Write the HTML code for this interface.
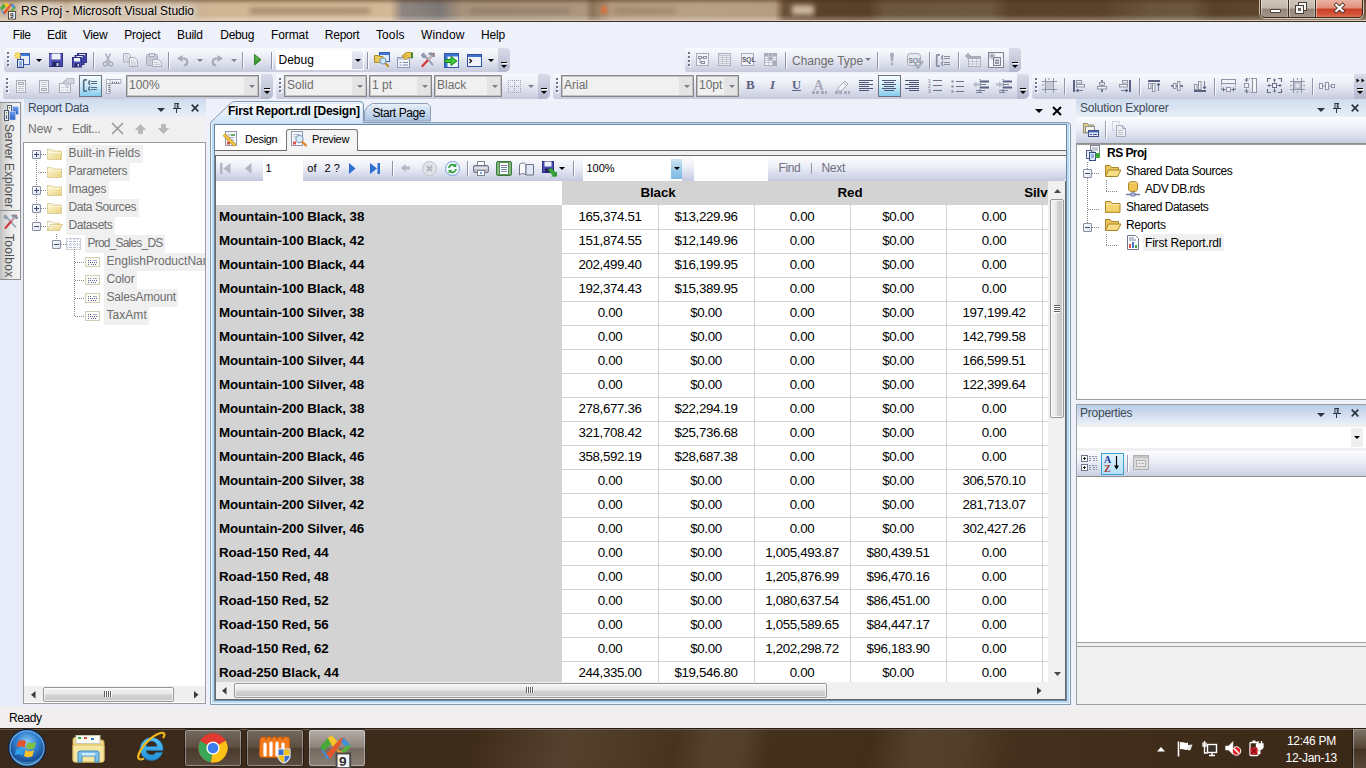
<!DOCTYPE html>
<html>
<head>
<meta charset="utf-8">
<title>RS Proj - Microsoft Visual Studio</title>
<style>
*{box-sizing:border-box;margin:0;padding:0}
html,body{width:1366px;height:768px;overflow:hidden;background:#eef1fa;font-family:"Liberation Sans",sans-serif;font-size:12px;color:#000}
.a{position:absolute}
svg{position:absolute;overflow:visible}
#root{position:relative;width:1366px;height:768px;overflow:hidden}
.t{position:absolute;white-space:nowrap;line-height:14px}
/* title bar */
#title{left:0;top:0;width:1366px;height:22px;background:linear-gradient(90deg,#cdb89e 0px,#c9b296 195px,#d2b694 215px,#d4b896 390px,#8f857f 402px,#7d7876 440px,#a8927b 462px,#ad967d 585px,#8c745a 592px,#b39a7e 612px,#b8a083 700px,#b59c7f 775px,#6a5138 784px,#5a4129 822px,#594028 868px,#6c563d 885px,#6e583f 990px,#5a4129 1010px,#5b422a 1100px,#6a543b 1150px,#6c563d 1190px,#58402a 1215px,#5d452d 1250px,#6f5943 1366px)}
#title .shade{left:0;top:0;width:1366px;height:20px;background:linear-gradient(180deg,rgba(70,45,20,.45) 0,rgba(70,45,20,.12) 3px,rgba(255,255,255,0) 5px,rgba(255,255,255,0) 15px,rgba(255,255,255,.18) 18px,rgba(255,255,255,.25) 20px)}
#title .bl{left:0;top:20px;width:1366px;height:2px;background:linear-gradient(180deg,#d9ccba 0,#d9ccba 50%,#382d24 50%,#382d24 100%)}
#title .txt{left:21px;top:4px;font-size:12px;color:#000;text-shadow:0 0 6px #fff,0 0 8px #fff,0 0 10px rgba(255,255,255,.9)}
/* menu */
#menubar{left:0;top:22px;width:1366px;height:26px;background:#eef1fa}
#menubar span{position:absolute;top:6px;font-size:12px;white-space:nowrap;line-height:14px}
/* toolbars */
.tb{position:absolute;height:24.500px;border-radius:3px 5px 6px 3px;background:linear-gradient(180deg,#f9fafd 0%,#eff1f8 30%,#d9dcea 70%,#c6cadc 100%)}
.ovf{position:absolute;right:0;top:0;width:12px;height:100%;border-radius:0 4px 5px 0;background:linear-gradient(180deg,#d8dbe8,#b4b8cd)}
.grip{position:absolute;left:3px;top:4px;width:3px;height:16px}
.grip i{position:absolute;left:0;width:2px;height:2px;background:#6f738a;box-shadow:1px 1px 0 #fff}
.sep{position:absolute;top:4px;width:1px;height:17px;background:#9094aa;box-shadow:1px 0 0 #fbfbfd}
.dd{position:absolute;width:0;height:0;border-left:3px solid transparent;border-right:3px solid transparent;border-top:3px solid #000}
.dd.g{border-top-color:#7b7f8c}
.cb{position:absolute;top:2px;height:21px;border:1px solid #868686;background:#f0f0f0;box-shadow:inset 0 0 0 1px #c4c4c4;font-size:12px;color:#6d6d6d}
.cb .btn{position:absolute;right:1px;top:1px;bottom:1px;width:13px;background:#e4e4e4}
.cb .t{left:2px;top:1.500px;line-height:15px}
.sel{position:absolute;border:1px solid #6e7380;background:linear-gradient(180deg,#f4fbff 0,#d3eefa 45%,#84cbeb 100%)}
/* panels */
.phead{position:absolute;height:18px;background:linear-gradient(180deg,#cfdcee 0%,#dbe5f3 50%,#e9eff8 100%);font-size:12px;color:#404a58;white-space:nowrap}
.phead .t{left:4px;top:1px}
#status{left:0;top:706px;width:1366px;height:22px;background:#f0eeee;font-size:12px}
#taskbar{left:0;top:728px;width:1366px;height:40px;background:linear-gradient(100deg,#3b2a1b 0,#3d2b1b 440px,#3f2c1b 470px,#54412e 560px,#4d3a27 620px,#47331f 668px,#54412e 700px,#523f2c 735px,#43301d 760px,#412e1b 860px,#54412e 905px,#513e2b 950px,#43301d 1000px,#3f2c1a 1150px,#3a2817 1366px)}
#rpt .t{line-height:23px;height:24px}
#rpt .hd{font-weight:bold;text-align:center;letter-spacing:-.1px}
#rpt .rn{font-weight:bold;letter-spacing:-.1px}
#rpt .nv{width:96px;text-align:center;letter-spacing:-.37px}

</style>
</head>
<body>
<div id="root">

<!-- p_title -->
<div id="title" class="a"><div class="a shade"></div><div class="a" style="left:250px;top:8px;width:120px;height:6px;background:rgba(110,85,60,.45);filter:blur(2.500px)"></div><div class="a" style="left:470px;top:8px;width:100px;height:6px;background:rgba(110,95,80,.35);filter:blur(2.500px)"></div><div class="a" style="left:601px;top:6px;width:6px;height:8px;background:rgba(225,110,50,.8);filter:blur(1.500px)"></div><div class="a" style="left:615px;top:8px;width:60px;height:6px;background:rgba(125,100,80,.35);filter:blur(2.500px)"></div><div class="a" style="left:792px;top:5px;width:22px;height:10px;background:rgba(215,195,170,.9);filter:blur(2.500px)"></div><div class="a bl"></div><svg style="left:0px;top:1px" width="17" height="19" viewBox="0 0 17 19"><path d="M0 7L4 2.500 6.200 5 2 9.200z" fill="#4aa83a"/><path d="M4 2.500L6 1.200 9 4.500 6.500 7z" fill="#f4c62a"/><path d="M10.500 2.800L13 2.300 5.200 13.200 3 11.200z" fill="#e4572a"/><path d="M0 7.300L2 9.200 5.200 13.200 3.300 13.200z" fill="#3f8fd8"/><path d="M12 2.300L16 6.500 14.300 8.200 10.800 4.600z" fill="#3f8fd8"/><path d="M16 6.500L13 10.200 10.500 9.200 14.300 6z" fill="#5aae3e"/><path d="M8.500 8L10.500 9.200 13 10.200 9.500 11.500z" fill="#f0a02a"/><rect x="8.500" y="10.500" width="7" height="7.500" fill="#f6f6f6" stroke="#4a4a4a"/><text x="9.800" y="17" font-family="Liberation Sans" font-size="7" font-weight="bold" fill="#333">9</text></svg><div class="t txt" style="letter-spacing:-0.026px">RS Proj - Microsoft Visual Studio</div><div class="a" style="left:1259px;top:-2px;width:105px;height:21px;border:1px solid rgba(235,220,200,.8);border-radius:0 0 6px 6px"></div><div class="a" style="left:1260px;top:-1px;width:103px;height:19px;border:1px solid #3c2c20;border-radius:0 0 5px 5px;overflow:hidden;background:#3c2c20"><div class="a" style="left:0;top:0;width:27px;height:18px;background:linear-gradient(180deg,#cfc6bb 0,#c2b7aa 45%,#94877a 50%,#a3978a 100%);box-shadow:inset 1px 0 0 rgba(255,255,255,.45),inset -1px 0 0 rgba(255,255,255,.3)"></div><div class="a" style="left:28px;top:0;width:26px;height:18px;background:linear-gradient(180deg,#cfc6bb 0,#c2b7aa 45%,#94877a 50%,#a3978a 100%);box-shadow:inset 1px 0 0 rgba(255,255,255,.45),inset -1px 0 0 rgba(255,255,255,.3)"></div><div class="a" style="left:55px;top:0;width:47px;height:18px;background:linear-gradient(180deg,#eab3a3 0,#e08e78 45%,#c83f27 50%,#d4563a 80%,#e08060 100%);box-shadow:inset 1px 0 0 rgba(255,255,255,.45),inset -1px 0 0 rgba(255,255,255,.3)"></div></div><div class="a" style="left:1269.500px;top:8.500px;width:11px;height:4px;background:#fff;border:1px solid #4a4038;border-radius:1px"></div><svg style="left:1295px;top:1.5px" width="12" height="12" viewBox="0 0 12 12"><rect x="3.500" y="0.500" width="8" height="8" fill="#f4f4f4" stroke="#4a4038"/><rect x="0.500" y="3.500" width="8" height="8" fill="#f4f4f4" stroke="#4a4038"/><rect x="3" y="6" width="3" height="3" fill="#6a6058"/></svg><svg style="left:1334px;top:3px" width="11" height="10" viewBox="0 0 11 10"><path d="M2.300 2l6.400 6M8.700 2l-6.400 6" stroke="#4a3028" stroke-width="3.800" stroke-linecap="square"/><path d="M2.300 2l6.400 6M8.700 2l-6.400 6" stroke="#fff" stroke-width="2.200" stroke-linecap="square"/></svg></div>
<div id="menubar" class="a"><span style="left:12.8px;letter-spacing:-0.409px">File</span><span style="left:47.1px;letter-spacing:-0.319px">Edit</span><span style="left:82.7px;letter-spacing:-0.273px">View</span><span style="left:124.2px;letter-spacing:-0.178px">Project</span><span style="left:177.1px;letter-spacing:-0.197px">Build</span><span style="left:220.3px;letter-spacing:-0.332px">Debug</span><span style="left:270.9px;letter-spacing:-0.084px">Format</span><span style="left:324.8px;letter-spacing:-0.236px">Report</span><span style="left:376px;letter-spacing:0.097px">Tools</span><span style="left:420.9px;letter-spacing:0.187px">Window</span><span style="left:480.9px;letter-spacing:-0.145px">Help</span></div>

<!-- p_toolbars -->
<div class="tb" style="left:4px;top:48px;width:506px;height:24px"><div class="grip"><i style="top:0"></i><i style="top:4px"></i><i style="top:8px"></i><i style="top:12px"></i></div><svg style="left:10px;top:4px" width="16" height="16" viewBox="0 0 16 16"><rect x="6.5" y="1.5" width="9" height="11" fill="#e6ecf8" stroke="#3b62b5"/><rect x="7" y="2" width="8" height="2" fill="#3f78d8"/>
<path d="M3.5 0v7M0 3.5h7M1 1l5 5M6 1l-5 5" stroke="#f2c832" stroke-width="1.2"/><circle cx="3.5" cy="3.5" r="1.6" fill="#ffe979"/>
<rect x="3.5" y="7.5" width="6" height="8" fill="#dfe8f8" stroke="#2f4b86"/><path d="M5 10h3M5 12h3M5 14h3" stroke="#4a74c9"/></svg><div class="dd" style="left:32px;top:11px"></div><svg style="left:45px;top:5px" width="14" height="14" viewBox="0 0 14 14"><rect x="0.5" y="0.5" width="13" height="13" fill="#4a4db0" stroke="#2c2f82"/><rect x="2.5" y="0.5" width="9" height="6" fill="#eef0fa"/><rect x="3.5" y="9" width="7" height="4.5" fill="#23265e"/><rect x="7.5" y="10" width="2" height="3" fill="#cfd2ea"/><path d="M1 1v12" stroke="#8a8de0"/></svg><svg style="left:68px;top:4.5px" width="15" height="15" viewBox="0 0 15 15"><rect x="5.5" y="0.5" width="9" height="9" fill="#4a4db0" stroke="#2c2f82"/><rect x="7" y="1" width="6" height="2" fill="#e6e8f6"/>
<rect x="3" y="2.5" width="9" height="9" fill="#4a4db0" stroke="#2c2f82"/><rect x="4.5" y="3" width="6" height="2" fill="#e6e8f6"/>
<rect x="0.5" y="4.5" width="9" height="9.5" fill="#4a4db0" stroke="#2c2f82"/><rect x="2" y="5" width="6" height="3.5" fill="#eef0fa"/><rect x="3" y="10.5" width="4.5" height="3.5" fill="#23265e"/><rect x="5.5" y="11" width="1.5" height="2.5" fill="#cfd2ea"/></svg><div class="sep" style="left:89px;top:4px"></div><svg style="left:99px;top:5px" width="10" height="14" viewBox="0 0 10 14"><path d="M2.5 0.5L6.5 9M7.5 0.5L3.5 9" stroke="#a9adba" stroke-width="1.6" fill="none"/><circle cx="2.3" cy="11" r="2" fill="none" stroke="#a9adba" stroke-width="1.4"/><circle cx="7.7" cy="11" r="2" fill="none" stroke="#a9adba" stroke-width="1.4"/></svg><svg style="left:119px;top:5px" width="15" height="14" viewBox="0 0 15 14"><path d="M0.5 0.5h5l2 2v6.5h-7z" fill="#e9ebf2" stroke="#a9adba"/><path d="M2 3h3M2 5h4M2 7h4" stroke="#c4c7d2"/>
<path d="M6.5 4.5h5l3 3v6h-8z" fill="#eceef4" stroke="#a9adba"/><path d="M8 8h3M8 10h5M8 12h5" stroke="#c4c7d2"/></svg><svg style="left:142px;top:5px" width="16" height="14" viewBox="0 0 16 14"><rect x="0.5" y="1.5" width="11" height="11" rx="1" fill="#c9ccd8" stroke="#a9adba"/><rect x="3.5" y="0.5" width="5" height="3" fill="#e4e6ee" stroke="#a9adba"/>
<path d="M6.5 6.5h6l3 3v4h-9z" fill="#eceef4" stroke="#a9adba"/><path d="M8 9.5h4M8 11.5h6" stroke="#c4c7d2"/></svg><div class="sep" style="left:164px;top:4px"></div><svg style="left:173px;top:6.5px" width="13" height="12" viewBox="0 0 13 12"><path d="M0 3.5L5.5 0v2.5h1.5a4.5 4.5 0 0 1 1.2 8.8l-1.5 0.4v-2l0.7-0.3a2.6 2.6 0 0 0 -0.8-5h-1.1v2.6z" fill="#a9adba"/></svg><div class="dd g" style="left:193px;top:11px"></div><svg style="left:206px;top:6.5px" width="13" height="12" viewBox="0 0 13 12"><path d="M13 3.5L7.500 0v2.5h-1.500a4.5 4.5 0 0 0 -1.200 8.800l1.500 0.400v-2l-0.700-0.300a2.600 2.600 0 0 1 0.800-5h1.100v2.600z" fill="#a9adba"/></svg><div class="dd g" style="left:227px;top:11px"></div><div class="sep" style="left:238px;top:4px"></div><svg style="left:249.5px;top:6px" width="8" height="12" viewBox="0 0 8 12"><path d="M0.5 0.500v10.500L7 5.750z" fill="#3f9b2f" stroke="#1f6e1a" stroke-width="0.8"/><path d="M1.500 2v4l3-1.200z" fill="#6fc45a" opacity=".7"/></svg><div class="sep" style="left:267px;top:4px"></div><div class="a" style="left:272px;top:2px;width:88px;height:20px;background:#fff"><div class="a" style="right:1px;top:1px;width:11px;height:18px;background:linear-gradient(180deg,#eaedf6,#c9cde0)"></div><div class="t" style="left:2.500px;top:2.500px;font-size:12px">Debug</div><div class="dd" style="left:79px;top:9px"></div></div><div class="sep" style="left:363px;top:4px"></div><svg style="left:370px;top:4px" width="16" height="16" viewBox="0 0 16 16"><rect x="5.500" y="0.500" width="10" height="9" fill="#e3eaf8" stroke="#3b62b5"/><rect x="6" y="1" width="9" height="2" fill="#3f78d8"/>
<path d="M0.500 3.500h4l1 1h3.500v6h-8.500z" fill="#e8c75a" stroke="#b08a22"/>
<circle cx="9" cy="9" r="3" fill="#cfe6f7" stroke="#7f9fc5" stroke-width="1.200"/><path d="M11.300 11.300l3.500 3.500" stroke="#b98924" stroke-width="2"/></svg><svg style="left:393px;top:4px" width="16" height="16" viewBox="0 0 16 16"><rect x="0.500" y="5.500" width="12" height="10" fill="#f3f5fb" stroke="#8d97b5"/><rect x="1" y="6" width="11" height="2" fill="#c9d3ea"/><path d="M2.500 10.500h2M6 10.500h5M2.500 13h2M6 13h5" stroke="#7a88b0"/>
<path d="M5 4l4-3.500h6v5h-4l-2.500 2.500z" fill="#efc94e" stroke="#a98622" stroke-width=".8"/><rect x="14" y="0.500" width="2" height="6" fill="#3f8a3a"/><path d="M6 5l3-3M7.500 6l3-3" stroke="#a98622" stroke-width=".7"/></svg><svg style="left:416px;top:4px" width="16" height="16" viewBox="0 0 16 16"><path d="M3 2l10 11" stroke="#9aa3b5" stroke-width="2"/><path d="M1 3.500a3 3 0 0 1 4-2.500l-1.500 2 1 1 2-1.500a3 3 0 0 1 -3.500 3.500z" fill="#8e99b0"/>
<path d="M13.500 2L2.500 14" stroke="#d23a3a" stroke-width="2.400" stroke-linecap="round"/><path d="M8 8l5-5.500" stroke="#b9bfcc" stroke-width="2"/>
<path d="M8.500 1.500c2-1.500 5-0.500 6.500 2.500l-1.500 1c-1-2-2.500-2.500-4-2z" fill="#8f98ab" stroke="#6e788f" stroke-width=".6"/></svg><svg style="left:440px;top:4.5px" width="15" height="15" viewBox="0 0 15 15"><rect x="0.500" y="0.500" width="14" height="14" fill="#f1f4fb" stroke="#2f59a8"/><rect x="1" y="1" width="13" height="2.500" fill="#3b73d3"/><rect x="1" y="3" width="2.500" height="11" fill="#3b73d3"/>
<path d="M1 6.500h6v-3l6 4.500-6 4.500v-3h-6z" fill="#3fc83a" stroke="#15851a"/></svg><svg style="left:463px;top:5.5px" width="15" height="13" viewBox="0 0 15 13"><rect x="0.500" y="0.500" width="14" height="12" fill="#f0f3fb" stroke="#2f4f9a"/><rect x="1" y="1" width="13" height="2" fill="#3d6fcc"/><path d="M2.500 5l2 2-2 2" stroke="#111" stroke-width="1.300" fill="none"/></svg><div class="dd" style="left:484px;top:11px"></div><div class="ovf"><div class="a" style="left:3px;top:14px;width:6px;height:1px;background:#000;box-shadow:1px 1px 0 #fff"></div><div class="dd" style="left:3px;top:17px"></div></div></div><div class="tb" style="left:685px;top:48px;width:336px;height:24px"><div class="grip"><i style="top:0"></i><i style="top:4px"></i><i style="top:8px"></i><i style="top:12px"></i></div><svg style="left:10.5px;top:5px" width="13" height="13" viewBox="0 0 13 13"><rect x="0.500" y="0.500" width="12" height="12" fill="#f1f2f7" stroke="#a9adba"/><rect x="2.500" y="3.500" width="3" height="2" fill="none" stroke="#8d91a0"/><rect x="7.500" y="3.500" width="3" height="2" fill="none" stroke="#8d91a0"/><rect x="5.500" y="8.500" width="3" height="2" fill="none" stroke="#8d91a0"/><path d="M4 5.500v4h1.500M5.500 4.500h2" stroke="#8d91a0" fill="none"/></svg><svg style="left:33px;top:5px" width="13" height="13" viewBox="0 0 13 13"><rect x="0.500" y="0.500" width="12" height="12" fill="#f1f2f7" stroke="#a9adba"/><path d="M0.500 2.500h12M0.500 4.500h12M0.500 6.500h12M0.500 8.500h12M0.500 10.500h12M4.500 0.500v12M8.500 0.500v12" stroke="#c4c7d2"/></svg><svg style="left:56px;top:5px" width="13" height="13" viewBox="0 0 13 13"><rect x="0.500" y="0.500" width="12" height="12" fill="#f1f2f7" stroke="#a9adba"/><text x="1" y="9" font-family="Liberation Sans" font-size="6.500" font-weight="bold" fill="#555a6a">SQL</text></svg><svg style="left:79px;top:5px" width="13" height="13" viewBox="0 0 13 13"><rect x="0.500" y="0.500" width="12" height="12" fill="#f1f2f7" stroke="#a9adba"/><rect x="1" y="1" width="11" height="2" fill="#a9adba"/><path d="M0.500 3.500h12M0.500 5.500h12M0.500 7.500h12M0.500 9.500h12M4.500 0.500v12M8.500 0.500v12" stroke="#c4c7d2"/><rect x="5" y="4" width="3" height="3" fill="#a9adba"/><rect x="9" y="8" width="3" height="4" fill="#a9adba"/></svg><div class="sep" style="left:100px;top:4px"></div><div class="t" style="left:107px;top:5.500px;color:#6d6d6d;font-size:12px">Change Type</div><div class="dd g" style="left:180px;top:10px"></div><div class="sep" style="left:192px;top:4px"></div><svg style="left:203.5px;top:5px" width="6" height="13" viewBox="0 0 6 13"><path d="M1 1.500a1.500 1.500 0 0 1 4 0l-1 7h-2z" fill="#a9adba"/><circle cx="3" cy="11" r="1.400" fill="#a9adba"/></svg><svg style="left:222px;top:4.5px" width="16" height="16" viewBox="0 0 16 16"><rect x="0.500" y="0.500" width="13" height="12" rx="3" fill="#e6e8ef" stroke="#a9adba"/><text x="1.500" y="9.500" font-family="Liberation Sans" font-size="6.500" font-weight="bold" fill="#7a7f90">SQL</text><path d="M8 11l3 4 5-7" stroke="#a9adba" stroke-width="2" fill="none"/></svg><div class="sep" style="left:244px;top:4px"></div><svg style="left:251px;top:5.5px" width="15" height="13" viewBox="0 0 15 13"><path d="M4 0.800h-2.300q-1 0-1 1v9.400q0 1 1 1h2.300" fill="none" stroke="#8a8fa0" stroke-width="1.700"/><path d="M7.200 1.300q-3 2.200 0 4.400M7.200 7.300q-3 2.200 0 4.400" fill="none" stroke="#8a8fa0" stroke-width="1.600"/><path d="M8 2.500h6M8 4.500h6M8 8.500h6M8 10.500h6" stroke="#8a8fa0" stroke-width="1.100"/></svg><div class="sep" style="left:273px;top:4px"></div><svg style="left:280px;top:5px" width="16" height="14" viewBox="0 0 16 14"><rect x="3.500" y="3.500" width="12" height="10" fill="#eef0f5" stroke="#a9adba"/><rect x="4" y="4" width="11" height="2" fill="#a9adba"/><path d="M3.500 8.500h12M3.500 11h12M7.500 6v7.500M11.500 6v7.500" stroke="#c4c7d2"/><path d="M3 0v6M0 3h6" stroke="#a9adba" stroke-width="2"/></svg><svg style="left:303px;top:4px" width="16" height="16" viewBox="0 0 16 16"><rect x="0.500" y="0.500" width="15" height="15" fill="#f4f5f9" stroke="#7f8494"/><rect x="5.500" y="5.500" width="7" height="8" fill="#e4e6ee" stroke="#7f8494"/><path d="M7 8.500h4M7 11h4" stroke="#7f8494" stroke-width="1.500"/><path d="M4 0.500v7M0.500 4h7M1.500 1.500l5 5M6.500 1.500l-5 5" stroke="#8d91a0" stroke-width=".9"/></svg><div class="ovf"><div class="a" style="left:3px;top:14px;width:6px;height:1px;background:#000;box-shadow:1px 1px 0 #fff"></div><div class="dd" style="left:3px;top:17px"></div></div></div><div class="tb" style="left:3px;top:74px;width:270px"><div class="grip"><i style="top:0"></i><i style="top:4px"></i><i style="top:8px"></i><i style="top:12px"></i></div><svg style="left:13px;top:5.5px" width="10" height="13" viewBox="0 0 10 13"><rect x="0.500" y="0.500" width="9" height="12" fill="#f2f3f7" stroke="#a9adba"/><rect x="2.500" y="2.500" width="5" height="2" fill="#e4e6ee" stroke="#a9adba"/><path d="M2 6.500h6M2 8.500h6M2 10.500h6" stroke="#c4c7d2"/></svg><svg style="left:36px;top:5.5px" width="10" height="13" viewBox="0 0 10 13"><rect x="0.500" y="0.500" width="9" height="12" fill="#f2f3f7" stroke="#a9adba"/><rect x="2.500" y="8.500" width="5" height="2" fill="#e4e6ee" stroke="#a9adba"/><path d="M2 2.500h6M2 4.500h6M2 6.500h6" stroke="#c4c7d2"/></svg><svg style="left:56px;top:4px" width="16" height="16" viewBox="0 0 16 16"><rect x="0.500" y="5.500" width="11" height="9" fill="#f1f2f7" stroke="#a9adba"/><path d="M2.500 9.500h2M6 9.500h4M2.500 12h2M6 12h4" stroke="#c4c7d2"/><path d="M4 4l4-3.500h7v5h-4l-3 3z" fill="#d5d8e2" stroke="#a9adba" stroke-width=".8"/><path d="M5 5l3-3M6.500 6.500l3-3M8 6.500l2-2" stroke="#a9adba" stroke-width=".7"/></svg><div class="sel" style="left:76px;top:1px;width:23px;height:22px"></div><svg style="left:80px;top:5px" width="15" height="13" viewBox="0 0 15 13"><path d="M4 0.800h-2.300q-1 0-1 1v9.400q0 1 1 1h2.300" fill="none" stroke="#567086" stroke-width="1.700"/><path d="M7.200 1.300q-3 2.200 0 4.400M7.200 7.300q-3 2.200 0 4.400" fill="none" stroke="#567086" stroke-width="1.600"/><path d="M8 2.500h6M8 4.500h6M8 8.500h6M8 10.500h6" stroke="#567086" stroke-width="1.100"/></svg><svg style="left:103px;top:4.5px" width="16" height="15" viewBox="0 0 16 15"><path d="M0.500 0.500h14.500v4h-11v10h-3.500z" fill="#f3f4f8" stroke="#a9adba"/><path d="M6.500 2.500v2M8.500 3v1.500M10.500 2.500v2M12.500 3v1.500M2 6.500h2M2.500 8.500h1.500M2 10.500h2M2.500 12.500h1.500" stroke="#6f7487"/><rect x="0.500" y="0.500" width="3.500" height="4" fill="#fff" stroke="#a9adba"/></svg><div class="cb" style="left:123px;width:133px;top:1px;height:22px"><div class="btn"></div><div class="t">100%</div><div class="dd g" style="right:3px;top:8.5px;border-left-width:3px;border-right-width:3px"></div></div><div class="ovf"><div class="a" style="left:3px;top:14px;width:6px;height:1px;background:#000;box-shadow:1px 1px 0 #fff"></div><div class="dd" style="left:3px;top:17px"></div></div></div><div class="tb" style="left:276px;top:74px;width:274px"><div class="grip"><i style="top:0"></i><i style="top:4px"></i><i style="top:8px"></i><i style="top:12px"></i></div><div class="cb" style="left:8px;width:83px;top:1px;height:22px"><div class="btn"></div><div class="t">Solid</div><div class="dd g" style="right:3px;top:8.5px;border-left-width:3px;border-right-width:3px"></div></div><div class="cb" style="left:93px;width:63px;top:1px;height:22px"><div class="btn"></div><div class="t">1 pt</div><div class="dd g" style="right:3px;top:8.5px;border-left-width:3px;border-right-width:3px"></div></div><div class="cb" style="left:158px;width:68px;top:1px;height:22px"><div class="btn"></div><div class="t">Black</div><div class="dd g" style="right:3px;top:8.5px;border-left-width:3px;border-right-width:3px"></div></div><svg style="left:232px;top:6px" width="14" height="14" viewBox="0 0 14 14"><path d="M0 0.500h14M0 6.500h14M0 12.500h14M0.500 0v13M6.500 0v13M12.500 0v13" fill="none" stroke="#9da1b0" stroke-dasharray="1 1"/></svg><div class="dd g" style="left:252px;top:11px"></div><div class="ovf"><div class="a" style="left:3px;top:14px;width:6px;height:1px;background:#000;box-shadow:1px 1px 0 #fff"></div><div class="dd" style="left:3px;top:17px"></div></div></div><div class="tb" style="left:553px;top:74px;width:476px"><div class="grip"><i style="top:0"></i><i style="top:4px"></i><i style="top:8px"></i><i style="top:12px"></i></div><div class="cb" style="left:8px;width:133px;top:1px;height:22px"><div class="btn"></div><div class="t">Arial</div><div class="dd g" style="right:3px;top:8.5px;border-left-width:3px;border-right-width:3px"></div></div><div class="cb" style="left:143px;width:43px;top:1px;height:22px"><div class="btn"></div><div class="t">10pt</div><div class="dd g" style="right:3px;top:8.5px;border-left-width:3px;border-right-width:3px"></div></div><div class="t" style="left:193px;top:3.200px;font-family:'Liberation Serif',serif;font-weight:bold;font-size:13px;line-height:16px;color:#5c6486">B</div><div class="t" style="left:217px;top:3.200px;font-style:italic;font-family:'Liberation Serif',serif;font-weight:bold;font-size:13px;line-height:16px;color:#5c6486">I</div><div class="t" style="left:239px;top:3.200px;font-family:'Liberation Serif',serif;font-weight:bold;font-size:13px;line-height:16px;color:#5c6486;font-size:12.500px;border-bottom:1px solid #5c6486;height:13.800px">U</div><svg style="left:259px;top:6px" width="15" height="14" viewBox="0 0 15 14"><text x="1.500" y="10" font-family="Liberation Serif" font-size="14" font-weight="bold" fill="#a5a9b8">A</text><path d="M0 12.500h3M4 12.500h3M9 12.500h3M13 12.500h2" stroke="#a5a9b8" stroke-width="3"/></svg><svg style="left:282px;top:6px" width="15" height="14" viewBox="0 0 15 14"><path d="M3 8l7-7 3 3-7 7h-3z" fill="#f1f2f6" stroke="#a5a9b8"/><path d="M8.500 2.500l3 3" stroke="#a5a9b8"/><path d="M0 12.500h3M4 12.500h3M9 12.500h3M13 12.500h2" stroke="#a5a9b8" stroke-width="3"/></svg><svg style="left:306px;top:6px" width="14" height="11" viewBox="0 0 14 11"><path d="M0 0.500h14M0 2.500h10M0 4.500h14M0 6.500h10M0 8.500h14M0 10.500h10" stroke="#4d5373"/></svg><div class="sel" style="left:325px;top:1px;width:23px;height:22px"></div><svg style="left:329px;top:6px" width="14" height="11" viewBox="0 0 14 11"><path d="M0 0.500h14M2 2.500h10M0 4.500h14M2 6.500h10M0 8.500h14M2 10.500h10" stroke="#4d5373"/></svg><svg style="left:352px;top:6px" width="14" height="11" viewBox="0 0 14 11"><path d="M0 0.500h14M4 2.500h10M0 4.500h14M4 6.500h10M0 8.500h14M4 10.500h10" stroke="#4d5373"/></svg><svg style="left:375px;top:5px" width="14" height="14" viewBox="0 0 14 14"><path d="M5 1.500h9M5 6.500h9M5 11.500h9" stroke="#6a6f88" stroke-width="1.200"/><text x="0" y="3.500" font-family="Liberation Sans" font-size="5" font-weight="bold" fill="#9297a8">1</text><text x="0" y="8.500" font-family="Liberation Sans" font-size="5" font-weight="bold" fill="#9297a8">2</text><text x="0" y="13.500" font-family="Liberation Sans" font-size="5" font-weight="bold" fill="#9297a8">3</text></svg><svg style="left:398px;top:5.5px" width="14" height="14" viewBox="0 0 14 14"><path d="M5 1.500h8M5 6.500h8M5 11.500h8" stroke="#6a6f88" stroke-width="1.200"/><circle cx="1.500" cy="1.500" r="1.300" fill="#9297a8"/><circle cx="1.500" cy="6.500" r="1.300" fill="#9297a8"/><circle cx="1.500" cy="11.500" r="1.300" fill="#9297a8"/></svg><svg style="left:420px;top:5px" width="16" height="14" viewBox="0 0 16 14"><path d="M7 0v14" stroke="#6a6f88" stroke-dasharray="1 1"/><path d="M7 2.500h9M7 8.500h9" stroke="#5b6182" stroke-width="2"/><path d="M7 5.500h6M3 11.500h9M3 13.500h6" stroke="#7d8299" stroke-width="1.200"/><path d="M0 5.500l3.500-3v2h3v2h-3v2z" fill="#b5b8c6"/></svg><svg style="left:443px;top:5px" width="16" height="14" viewBox="0 0 16 14"><path d="M7 0v14" stroke="#6a6f88" stroke-dasharray="1 1"/><path d="M7 2.500h9M7 8.500h9" stroke="#5b6182" stroke-width="2"/><path d="M7 5.500h6M3 11.500h9M3 13.500h6" stroke="#7d8299" stroke-width="1.200"/><path d="M6.500 5.500l-3.500-3v2h-3v2h3v2z" fill="#b5b8c6"/></svg><div class="ovf"><div class="a" style="left:3px;top:14px;width:6px;height:1px;background:#000;box-shadow:1px 1px 0 #fff"></div><div class="dd" style="left:3px;top:17px"></div></div></div><div class="tb" style="left:1032px;top:74px;width:334px;border-radius:3px 0 0 3px"><div class="grip"><i style="top:0"></i><i style="top:4px"></i><i style="top:8px"></i><i style="top:12px"></i></div><svg style="left:10px;top:4px" width="15" height="15" viewBox="0 0 15 15"><path d="M3.500 0v15M11.500 0v15M0 3.500h15M0 11.500h15" stroke="#8f94a6"/><rect x="4" y="4" width="7" height="7" fill="#c9ccd8"/><path d="M5.500 0.500h3l-1.500 1.500zM0.500 5.500v3l1.500-1.500z" fill="#8f94a6"/></svg><div class="sep" style="left:32px;top:4px"></div><svg style="left:41px;top:6px" width="12" height="12" viewBox="0 0 12 12"><path d="M1 0v12" stroke="#5b6182" stroke-width="2"/><rect x="3.500" y="0.500" width="5" height="2.500" fill="#f3f4f8" stroke="#8f94a6"/><rect x="3.500" y="4.500" width="8" height="2.500" fill="#f3f4f8" stroke="#8f94a6"/><path d="M3 10.500h7M3 10.500l2-1.500v3z" stroke="#5b6182" fill="#5b6182" stroke-width=".8"/></svg><svg style="left:65px;top:6px" width="10" height="12" viewBox="0 0 10 12"><path d="M5 0v12" stroke="#5b6182" stroke-width="1.600"/><rect x="2.500" y="2.500" width="5" height="2.500" fill="#f3f4f8" stroke="#8f94a6"/><rect x="0.500" y="6.500" width="9" height="2.500" fill="#f3f4f8" stroke="#8f94a6"/></svg><svg style="left:87px;top:6px" width="12" height="12" viewBox="0 0 12 12"><path d="M11 0v12" stroke="#5b6182" stroke-width="2"/><rect x="3.500" y="0.500" width="5" height="2.500" fill="#f3f4f8" stroke="#8f94a6"/><rect x="0.500" y="4.500" width="8" height="2.500" fill="#f3f4f8" stroke="#8f94a6"/><path d="M2 10.500h7M9 10.500l-2-1.500v3z" stroke="#5b6182" fill="#5b6182" stroke-width=".8"/></svg><div class="sep" style="left:107px;top:4px"></div><svg style="left:116px;top:6px" width="12" height="12" viewBox="0 0 12 12"><path d="M0 1h12" stroke="#5b6182" stroke-width="2"/><rect x="0.500" y="3.500" width="2.500" height="5" fill="#f3f4f8" stroke="#8f94a6"/><rect x="4.500" y="3.500" width="2.500" height="8" fill="#f3f4f8" stroke="#8f94a6"/><path d="M10.500 4v7M10.500 3l-1.500 2h3z" stroke="#5b6182" fill="#5b6182" stroke-width=".8"/></svg><svg style="left:139px;top:7px" width="12" height="10" viewBox="0 0 12 10"><path d="M0 5h12" stroke="#5b6182" stroke-width="1.600"/><rect x="2.500" y="2.500" width="2.500" height="5" fill="#f3f4f8" stroke="#8f94a6"/><rect x="6.500" y="0.500" width="2.500" height="9" fill="#f3f4f8" stroke="#8f94a6"/></svg><svg style="left:162px;top:6px" width="12" height="12" viewBox="0 0 12 12"><path d="M0 11h12" stroke="#5b6182" stroke-width="2"/><rect x="0.500" y="4.500" width="2.500" height="5" fill="#f3f4f8" stroke="#8f94a6"/><rect x="4.500" y="1.500" width="2.500" height="8" fill="#f3f4f8" stroke="#8f94a6"/><path d="M10.500 1v7M10.500 9l-1.500-2h3z" stroke="#5b6182" fill="#5b6182" stroke-width=".8"/></svg><div class="sep" style="left:182px;top:4px"></div><svg style="left:189px;top:4px" width="15" height="15" viewBox="0 0 15 15"><rect x="0.500" y="1.500" width="14" height="4" fill="#f3f4f8" stroke="#8f94a6"/><path d="M0.500 6v5M14.500 6v5" stroke="#8f94a6" stroke-dasharray="1 1"/><rect x="5.500" y="9.500" width="4" height="4" fill="#f3f4f8" stroke="#8f94a6"/><path d="M0.500 11.500h4M10.500 11.500h4M2.500 9.500v4M12.500 9.500v4" stroke="#6a6f88"/></svg><svg style="left:212px;top:4px" width="14" height="15" viewBox="0 0 14 15"><rect x="8.500" y="0.500" width="4" height="14" fill="#f3f4f8" stroke="#8f94a6"/><path d="M3 0.500h5M3 14.500h5" stroke="#8f94a6" stroke-dasharray="1 1"/><rect x="0.500" y="5.500" width="4" height="4" fill="#f3f4f8" stroke="#8f94a6"/><path d="M2.500 0v4M2.500 11v4M0.500 2h4M0.500 13h4" stroke="#6a6f88"/></svg><svg style="left:235px;top:4px" width="15" height="15" viewBox="0 0 15 15"><path d="M0.500 4v-3.500h3.500M11 0.500h3.500v3.500M14.500 11v3.500h-3.500M4 14.500h-3.500v-3.500" fill="none" stroke="#6a6f88" stroke-width="1.200"/><rect x="5.500" y="5.500" width="4" height="4" fill="#f3f4f8" stroke="#6a6f88"/><path d="M7.500 0.500v4M7.500 10.500v4M0.500 7.500h4M10.500 7.500h4M6 2h3M6 13h3M2 6v3M13 6v3" stroke="#6a6f88"/></svg><svg style="left:258px;top:4px" width="15" height="15" viewBox="0 0 15 15"><path d="M3.500 0v15M11.500 0v15M0 3.500h15M0 11.500h15" stroke="#8f94a6"/><rect x="4" y="4" width="7" height="7" fill="#b9bccb"/><rect x="5.500" y="5.500" width="4" height="4" fill="#e4e6ee"/><path d="M6 0.500h3l-1.500 1.500zM6 14.500h3l-1.500-1.500zM0.500 6v3l1.500-1.500zM14.500 6v3l-1.500-1.500z" fill="#8f94a6"/></svg><div class="sep" style="left:280px;top:4px"></div><svg style="left:287px;top:8px" width="16" height="8" viewBox="0 0 16 8"><path d="M0 4h16" stroke="#8f94a6"/><rect x="0.500" y="1.500" width="3" height="5" fill="#f3f4f8" stroke="#8f94a6"/><rect x="6.500" y="0.500" width="3" height="7" fill="#f3f4f8" stroke="#8f94a6"/><rect x="12.500" y="2.500" width="3" height="3" fill="#f3f4f8" stroke="#8f94a6"/></svg><div class="ovf" style="border-radius:0;width:12px"><div class="dd" style="left:2px;top:5px;transform:rotate(-90deg);border-left-width:2.500px;border-right-width:2.500px"></div><div class="dd" style="left:7px;top:5px;transform:rotate(-90deg);border-left-width:2.500px;border-right-width:2.500px"></div><div class="a" style="left:3px;top:14px;width:6px;height:1px;background:#000;box-shadow:1px 1px 0 #fff"></div><div class="dd" style="left:3px;top:17px"></div></div></div>
<!-- p_left -->
<div class="a" style="left:0;top:99px;width:23px;height:607px;background:#e8ebf8"></div><div class="a" style="left:-1px;top:102px;width:22px;height:109px;border:1px solid #8f8f8f;background:linear-gradient(90deg,#bdbdbd 0,#cfcfcf 15%,#ececec 60%,#f4f4f4 100%)"></div><div class="a" style="left:-1px;top:210px;width:22px;height:70px;border:1px solid #8f8f8f;background:linear-gradient(90deg,#bdbdbd 0,#cfcfcf 15%,#ececec 60%,#f4f4f4 100%)"></div><svg style="left:3px;top:104px" width="17" height="18" viewBox="0 0 17 18"><defs><linearGradient id="seb" x1="0" y1="0" x2="0" y2="1"><stop offset="0" stop-color="#6fa0ee"/><stop offset="1" stop-color="#2f5fc4"/></linearGradient></defs><rect x="9.500" y="2.500" width="6" height="8" fill="url(#seb)" stroke="#c5d6f2" stroke-width=".6"/><rect x="4.500" y="1.500" width="4" height="7" fill="#eef1f6" stroke="#5b6478"/><path d="M6.500 3v1.500" stroke="#7a9a5a" stroke-width="1.200"/><rect x="6.500" y="7.500" width="6" height="8.500" fill="url(#seb)" stroke="#c5d6f2" stroke-width=".6"/><rect x="1.500" y="6.500" width="4" height="10" fill="#eef1f6" stroke="#4f586c"/><path d="M3.500 8v1.500" stroke="#7a9a5a" stroke-width="1.200"/><path d="M3.500 11v4" stroke="#5b6478" stroke-width="1.200"/></svg><div class="t" style="left:1.500px;top:124px;width:14px;height:90px;writing-mode:vertical-rl;font-size:12px;line-height:14px;color:#505050;letter-spacing:0.043px">Server Explorer</div><svg style="left:3px;top:214px" width="16" height="15" viewBox="0 0 16 15"><path d="M2 1.500l11 12" stroke="#9aa3b5" stroke-width="1.800"/><path d="M13 1.500L2.500 14" stroke="#cc3a3a" stroke-width="2" stroke-linecap="round"/><path d="M8 7l5-5.500" stroke="#b9bfcc" stroke-width="1.800"/><path d="M8.500 1.500c2-1.500 5-0.500 6.500 2.500l-1.500 1c-1-2-2.500-2.500-4-2z" fill="#8f98ab" stroke="#6e788f" stroke-width=".6"/><path d="M0.500 3a2.500 2.500 0 0 1 3.500-2l-1.300 1.600 0.800 0.800 1.700-1.200a2.500 2.500 0 0 1 -3 3z" fill="#8e99b0"/></svg><div class="t" style="left:1.500px;top:234px;width:14px;height:50px;writing-mode:vertical-rl;font-size:12px;line-height:14px;color:#505050;letter-spacing:0.32px">Toolbox</div><div class="phead" style="left:24px;top:99px;width:182px"><div class="t" style="top:2px;letter-spacing:-0.373px">Report Data</div></div><div class="dd" style="left:157px;top:108px;border-left-width:4px;border-right-width:4px;border-top-width:4px;border-top-color:#2b3644"></div><svg style="left:173px;top:103px" width="8" height="10" viewBox="0 0 8 10"><path d="M1.500 0.500h4.500M2 0.500v5M5 0.500v5M4.300 0.500v5M0 5.500h8M3.500 6v4" stroke="#2b3644" fill="none"/></svg><svg style="left:190.5px;top:104px" width="8" height="8" viewBox="0 0 8 8"><path d="M0.700 0.700l6.600 6.600M7.300 0.700l-6.600 6.600" stroke="#2b3644" stroke-width="1.700"/></svg><div class="a" style="left:24px;top:117px;width:182px;height:25px;background:#f0f0f0"></div><div class="t" style="left:28px;top:122px;color:#6d6d6d">New</div><div class="dd g" style="left:57px;top:128px;border-top-color:#8d8d8d"></div><div class="t" style="left:72px;top:122px;color:#6d6d6d;letter-spacing:-0.369px">Edit...</div><svg style="left:111px;top:122px" width="13" height="13" viewBox="0 0 13 13"><path d="M1 1l11 11M12 1l-11 11" stroke="#9a9a9a" stroke-width="1.600"/></svg><svg style="left:135px;top:124px" width="11" height="10" viewBox="0 0 11 10"><path d="M5.500 0.500l5 5h-3v4h-4v-4h-3z" fill="#b8b8b8" stroke="#a9a9a9" stroke-width=".6"/></svg><svg style="left:158px;top:124px" width="11" height="10" viewBox="0 0 11 10"><path d="M5.500 9.500l5-5h-3v-4h-4v4h-3z" fill="#b8b8b8" stroke="#a9a9a9" stroke-width=".6"/></svg><div class="a" style="left:23px;top:142px;width:183px;height:562px;border:1px solid #9c9c9c;background:#fff;overflow:hidden"><div class="a" style="left:12px;top:15px;width:1px;height:64px;background:repeating-linear-gradient(180deg,#8a8a8a 0,#8a8a8a 1px,transparent 1px,transparent 2px)"></div><div class="a" style="left:17px;top:11px;width:6px;height:1px;background:repeating-linear-gradient(90deg,#8a8a8a 0,#8a8a8a 1px,transparent 1px,transparent 2px)"></div><div class="a" style="left:8px;top:7px;width:9px;height:9px;border:1px solid #8a8fa6;background:linear-gradient(135deg,#fff,#dfe2ee);border-radius:1px"><div class="a" style="left:1px;top:3px;width:5px;height:1px;background:#3c4b7a"></div><div class="a" style="left:3px;top:1px;width:1px;height:5px;background:#3c4b7a"></div></div><svg style="left:23px;top:4.5px" width="15" height="12" viewBox="0 0 15 12"><defs><linearGradient id="fg" x1="0" y1="0" x2="1" y2="1"><stop offset="0" stop-color="#fdf8dc"/><stop offset="1" stop-color="#ead37c"/></linearGradient></defs><path d="M0.500 1.500h4.500l1 1.500h8.500v8.500h-14z" fill="url(#fg)" stroke="#c4b06a" stroke-dasharray="1 1"/><path d="M1 4.500h13" stroke="#fdf7d8"/></svg><div class="a" style="left:42px;top:1.5px;width:76.7px;height:18px;background:#f0f0f0;overflow:hidden"><div class="t" style="left:2.500px;top:1.500px;color:#6d6d6d;letter-spacing:-0.022px">Built-in Fields</div></div><div class="a" style="left:17px;top:29px;width:6px;height:1px;background:repeating-linear-gradient(90deg,#8a8a8a 0,#8a8a8a 1px,transparent 1px,transparent 2px)"></div><div class="a" style="left:12px;top:29px;width:6px;height:1px;background:repeating-linear-gradient(90deg,#8a8a8a 0,#8a8a8a 1px,transparent 1px,transparent 2px)"></div><svg style="left:23px;top:22.5px" width="15" height="12" viewBox="0 0 15 12"><defs><linearGradient id="fg" x1="0" y1="0" x2="1" y2="1"><stop offset="0" stop-color="#fdf8dc"/><stop offset="1" stop-color="#ead37c"/></linearGradient></defs><path d="M0.500 1.500h4.500l1 1.500h8.500v8.500h-14z" fill="url(#fg)" stroke="#c4b06a" stroke-dasharray="1 1"/><path d="M1 4.500h13" stroke="#fdf7d8"/></svg><div class="a" style="left:42px;top:19.5px;width:63.6px;height:18px;background:#f0f0f0;overflow:hidden"><div class="t" style="left:2.500px;top:1.500px;color:#6d6d6d;letter-spacing:-0.342px">Parameters</div></div><div class="a" style="left:17px;top:47px;width:6px;height:1px;background:repeating-linear-gradient(90deg,#8a8a8a 0,#8a8a8a 1px,transparent 1px,transparent 2px)"></div><div class="a" style="left:8px;top:43px;width:9px;height:9px;border:1px solid #8a8fa6;background:linear-gradient(135deg,#fff,#dfe2ee);border-radius:1px"><div class="a" style="left:1px;top:3px;width:5px;height:1px;background:#3c4b7a"></div><div class="a" style="left:3px;top:1px;width:1px;height:5px;background:#3c4b7a"></div></div><svg style="left:23px;top:40.5px" width="15" height="12" viewBox="0 0 15 12"><defs><linearGradient id="fg" x1="0" y1="0" x2="1" y2="1"><stop offset="0" stop-color="#fdf8dc"/><stop offset="1" stop-color="#ead37c"/></linearGradient></defs><path d="M0.500 1.500h4.500l1 1.500h8.500v8.500h-14z" fill="url(#fg)" stroke="#c4b06a" stroke-dasharray="1 1"/><path d="M1 4.500h13" stroke="#fdf7d8"/></svg><div class="a" style="left:42px;top:37.5px;width:42.6px;height:18px;background:#f0f0f0;overflow:hidden"><div class="t" style="left:2.500px;top:1.500px;color:#6d6d6d;letter-spacing:-0.292px">Images</div></div><div class="a" style="left:17px;top:65px;width:6px;height:1px;background:repeating-linear-gradient(90deg,#8a8a8a 0,#8a8a8a 1px,transparent 1px,transparent 2px)"></div><div class="a" style="left:8px;top:61px;width:9px;height:9px;border:1px solid #8a8fa6;background:linear-gradient(135deg,#fff,#dfe2ee);border-radius:1px"><div class="a" style="left:1px;top:3px;width:5px;height:1px;background:#3c4b7a"></div><div class="a" style="left:3px;top:1px;width:1px;height:5px;background:#3c4b7a"></div></div><svg style="left:23px;top:58.5px" width="15" height="12" viewBox="0 0 15 12"><defs><linearGradient id="fg" x1="0" y1="0" x2="1" y2="1"><stop offset="0" stop-color="#fdf8dc"/><stop offset="1" stop-color="#ead37c"/></linearGradient></defs><path d="M0.500 1.500h4.500l1 1.500h8.500v8.500h-14z" fill="url(#fg)" stroke="#c4b06a" stroke-dasharray="1 1"/><path d="M1 4.500h13" stroke="#fdf7d8"/></svg><div class="a" style="left:42px;top:55.5px;width:72.5px;height:18px;background:#f0f0f0;overflow:hidden"><div class="t" style="left:2.500px;top:1.500px;color:#6d6d6d;letter-spacing:-0.434px">Data Sources</div></div><div class="a" style="left:17px;top:83px;width:6px;height:1px;background:repeating-linear-gradient(90deg,#8a8a8a 0,#8a8a8a 1px,transparent 1px,transparent 2px)"></div><div class="a" style="left:8px;top:79px;width:9px;height:9px;border:1px solid #8a8fa6;background:linear-gradient(135deg,#fff,#dfe2ee);border-radius:1px"><div class="a" style="left:1px;top:3px;width:5px;height:1px;background:#3c4b7a"></div></div><svg style="left:23px;top:76px" width="16" height="13" viewBox="0 0 16 13"><defs><linearGradient id="fg" x1="0" y1="0" x2="1" y2="1"><stop offset="0" stop-color="#fdf8dc"/><stop offset="1" stop-color="#ead37c"/></linearGradient></defs><path d="M0.500 2.500h4l1 1.500h7v2" fill="#f3e3a0" stroke="#c4b06a" stroke-dasharray="1 1"/><path d="M0.500 11.500l2.500-6h12.500l-3 6z" fill="url(#fg)" stroke="#c4b06a" stroke-dasharray="1 1"/><path d="M0.500 2.500v9" stroke="#c4b06a" stroke-dasharray="1 1"/></svg><div class="a" style="left:42px;top:73.5px;width:48.8px;height:18px;background:#f0f0f0;overflow:hidden"><div class="t" style="left:2.500px;top:1.500px;color:#6d6d6d;letter-spacing:-0.444px">Datasets</div></div><div class="a" style="left:32px;top:91px;width:1px;height:6px;background:repeating-linear-gradient(180deg,#8a8a8a 0,#8a8a8a 1px,transparent 1px,transparent 2px)"></div><div class="a" style="left:28px;top:97px;width:9px;height:9px;border:1px solid #8a8fa6;background:linear-gradient(135deg,#fff,#dfe2ee);border-radius:1px"><div class="a" style="left:1px;top:3px;width:5px;height:1px;background:#3c4b7a"></div></div><div class="a" style="left:37px;top:101px;width:5px;height:1px;background:repeating-linear-gradient(90deg,#8a8a8a 0,#8a8a8a 1px,transparent 1px,transparent 2px)"></div><svg style="left:42px;top:94.5px" width="15" height="12" viewBox="0 0 15 12"><rect x="0.500" y="0.500" width="14" height="11" fill="#fbfbfd" stroke="#9aa0b4" stroke-dasharray="1 1"/><path d="M1 3.500h13M1 6.500h13M1 9.500h13M4.500 1v10M8.500 1v10M11.500 1v10" stroke="#b9bfd6" stroke-dasharray="1 1"/></svg><div class="a" style="left:61px;top:91.5px;width:80px;height:18px;background:#f0f0f0;overflow:hidden"><div class="t" style="left:2.500px;top:1.500px;color:#6d6d6d;letter-spacing:-0.799px">Prod_Sales_DS</div></div><div class="a" style="left:50px;top:106px;width:1px;height:68px;background:repeating-linear-gradient(180deg,#8a8a8a 0,#8a8a8a 1px,transparent 1px,transparent 2px)"></div><div class="a" style="left:51px;top:119px;width:9px;height:1px;background:repeating-linear-gradient(90deg,#8a8a8a 0,#8a8a8a 1px,transparent 1px,transparent 2px)"></div><svg style="left:61px;top:114px" width="15" height="10" viewBox="0 0 15 10"><rect x="0.500" y="0.500" width="14" height="9" fill="#fdfcf4" stroke="#a89f6c" stroke-dasharray="1 1"/><path d="M3 3.500h4M8.500 3.500h4M3 5.500h9M3 7.500h2M6 7.500h6" stroke="#5b64a8" stroke-dasharray="1 1"/></svg><div class="a" style="left:80px;top:109.5px;width:101px;height:18px;background:#f0f0f0;overflow:hidden"><div class="t" style="left:2.500px;top:1.500px;color:#6d6d6d;letter-spacing:0.015px">EnglishProductName</div></div><div class="a" style="left:51px;top:137px;width:9px;height:1px;background:repeating-linear-gradient(90deg,#8a8a8a 0,#8a8a8a 1px,transparent 1px,transparent 2px)"></div><svg style="left:61px;top:132px" width="15" height="10" viewBox="0 0 15 10"><rect x="0.500" y="0.500" width="14" height="9" fill="#fdfcf4" stroke="#a89f6c" stroke-dasharray="1 1"/><path d="M3 3.500h4M8.500 3.500h4M3 5.500h9M3 7.500h2M6 7.500h6" stroke="#5b64a8" stroke-dasharray="1 1"/></svg><div class="a" style="left:80px;top:127.5px;width:33px;height:18px;background:#f0f0f0;overflow:hidden"><div class="t" style="left:2.500px;top:1.500px;color:#6d6d6d;letter-spacing:-0.135px">Color</div></div><div class="a" style="left:51px;top:155px;width:9px;height:1px;background:repeating-linear-gradient(90deg,#8a8a8a 0,#8a8a8a 1px,transparent 1px,transparent 2px)"></div><svg style="left:61px;top:150px" width="15" height="10" viewBox="0 0 15 10"><rect x="0.500" y="0.500" width="14" height="9" fill="#fdfcf4" stroke="#a89f6c" stroke-dasharray="1 1"/><path d="M3 3.500h4M8.500 3.500h4M3 5.500h9M3 7.500h2M6 7.500h6" stroke="#5b64a8" stroke-dasharray="1 1"/></svg><div class="a" style="left:80px;top:145.5px;width:74.3px;height:18px;background:#f0f0f0;overflow:hidden"><div class="t" style="left:2.500px;top:1.500px;color:#6d6d6d;letter-spacing:-0.188px">SalesAmount</div></div><div class="a" style="left:51px;top:173px;width:9px;height:1px;background:repeating-linear-gradient(90deg,#8a8a8a 0,#8a8a8a 1px,transparent 1px,transparent 2px)"></div><svg style="left:61px;top:168px" width="15" height="10" viewBox="0 0 15 10"><rect x="0.500" y="0.500" width="14" height="9" fill="#fdfcf4" stroke="#a89f6c" stroke-dasharray="1 1"/><path d="M3 3.500h4M8.500 3.500h4M3 5.500h9M3 7.500h2M6 7.500h6" stroke="#5b64a8" stroke-dasharray="1 1"/></svg><div class="a" style="left:80px;top:163.5px;width:45.3px;height:18px;background:#f0f0f0;overflow:hidden"><div class="t" style="left:2.500px;top:1.500px;color:#6d6d6d;letter-spacing:0.049px">TaxAmt</div></div><div class="a" style="left:0;top:543px;width:181px;height:16px;background:#efefef"></div><div class="a" style="left:19px;top:544px;width:131px;height:15px;border:1px solid #979797;border-radius:2px;background:linear-gradient(180deg,#f4f4f4 0,#e8e8e8 45%,#d2d2d2 55%,#c6c6c6 100%);box-shadow:inset 0 0 0 1px rgba(255,255,255,.7)"></div><div class="a" style="left:80px;top:548px;width:1px;height:6px;background:#5d5d5d;box-shadow:1px 0 0 #fff"></div><div class="a" style="left:82px;top:548px;width:1px;height:6px;background:#5d5d5d;box-shadow:1px 0 0 #fff"></div><div class="a" style="left:84px;top:548px;width:1px;height:6px;background:#5d5d5d;box-shadow:1px 0 0 #fff"></div><div class="a" style="left:86px;top:548px;width:1px;height:6px;background:#5d5d5d;box-shadow:1px 0 0 #fff"></div><svg style="left:7px;top:547.5px" width="5" height="8" viewBox="0 0 5 8"><path d="M4.500 0v7.500L0 3.750z" fill="#3a3a3a"/></svg><svg style="left:169.5px;top:547.5px" width="5" height="8" viewBox="0 0 5 8"><path d="M0 0v7.500L4.500 3.750z" fill="#3a3a3a"/></svg></div>
<!-- p_center -->
<svg style="left:360px;top:100px" width="80" height="24" viewBox="360 100 80 24"><defs><linearGradient id="sp" x1="0" y1="0" x2="0" y2="1"><stop offset="0" stop-color="#e9f1fa"/><stop offset="1" stop-color="#a9c3e2"/></linearGradient></defs><path d="M364.500 121V111q2-5 8-7.500H427.500l3 3V121z" fill="url(#sp)" stroke="#8fa0b4"/></svg><div class="t" style="left:372.500px;top:105.500px;font-size:12px;letter-spacing:-0.42px">Start Page</div><svg style="left:209px;top:100px" width="864" height="608" viewBox="209 100 864 608"><defs><linearGradient id="tabg" x1="0" y1="0" x2="0" y2="1"><stop offset="0" stop-color="#fbfdff"/><stop offset="1" stop-color="#cfe3f7"/></linearGradient></defs><path d="M210.500 704.500V122.500L231.500 102.500l2.500-1H361.500l2 2V122.500H1067.500q3 0 3 3V704.500z" fill="#bddaf4" stroke="#8399ae"/><path d="M211.500 703.500V123L232 103.500l2.500-1H360.500" fill="none" stroke="#f2f9ff"/><path d="M1069.500 125V703.500H211.500" fill="none" stroke="#eaf4fd"/><path d="M212 123.500L232.500 103.500H362.500V123.500z" fill="url(#tabg)"/><rect x="214.500" y="124.500" width="852" height="576" fill="#f0f0f0" stroke="#6888a5"/></svg><div class="t" style="left:228px;top:103.500px;font-weight:bold;font-size:12px;letter-spacing:-.25px">First Report.rdl [Design]</div><div class="dd" style="left:1035px;top:109px;border-left-width:4px;border-right-width:4px;border-top-width:4px"></div><svg style="left:1052px;top:105.5px" width="10" height="10" viewBox="0 0 10 10"><path d="M1 1l8 8M9 1l-8 8" stroke="#000" stroke-width="2"/></svg><div class="a" style="left:215px;top:125px;width:851px;height:25px;background:#fff"></div><div class="a" style="left:215px;top:150px;width:851px;height:1px;background:#6a6a6a"></div><div class="a" style="left:286px;top:129px;width:72px;height:22px;border:1px solid #7a7a7a;border-bottom:none;border-radius:3px 3px 0 0;background:#f4f4f4"></div><svg style="left:223px;top:131px" width="16" height="16" viewBox="0 0 16 16"><rect x="2.500" y="0.500" width="11" height="14" fill="#f7f8fb" stroke="#8f97ad"/><path d="M5 4h6M5 6.500h6M5 9h6" stroke="#9fb6d9"/><rect x="4" y="10.500" width="3" height="3" fill="#d9534a"/><rect x="8" y="3" width="4" height="2" fill="#6fae5d"/><path d="M1 3.500l11 11" stroke="#b98a1f" stroke-width="3.600"/><path d="M1 3.500l11 11" stroke="#f1c64b" stroke-width="2.200"/></svg><div class="t" style="left:245px;top:132px;font-size:11px;letter-spacing:-.3px">Design</div><svg style="left:291px;top:131px" width="16" height="16" viewBox="0 0 16 16"><rect x="0.500" y="0.500" width="11" height="14" fill="#f7f8fb" stroke="#8f97ad"/><path d="M2.500 3.500h6M2.500 6h3" stroke="#9fb6d9"/><rect x="2" y="10.500" width="3" height="3" fill="#d9534a"/><circle cx="8.500" cy="8" r="3.600" fill="#d9ecfa" stroke="#8fa5c4" stroke-width="1.300"/><path d="M11.500 11l3.500 3.500" stroke="#e08a2a" stroke-width="2.400" stroke-linecap="round"/></svg><div class="t" style="left:312px;top:132px;font-size:11px;letter-spacing:-.3px">Preview</div><div class="a" style="left:215px;top:155px;width:851px;height:26px;border-top:1px solid #6a6a6a;border-left:1px solid #6a6a6a;border-radius:0 0 4px 0;background:linear-gradient(180deg,#fdfdfe 0,#eef0f8 40%,#cfd4e7 85%,#c3c8de 100%)"></div><svg style="left:220px;top:162.5px" width="11" height="11" viewBox="0 0 11 11"><rect x="0" y="0" width="2.500" height="11" fill="#b4b7c2"/><path d="M10.500 0v11L3.500 5.500z" fill="#b4b7c2"/></svg><svg style="left:244.5px;top:162.5px" width="7" height="11" viewBox="0 0 7 11"><path d="M6.500 0v11L0 5.500z" fill="#b4b7c2"/></svg><div class="a" style="left:263px;top:156px;width:40px;height:25px;background:#fff"></div><div class="t" style="left:265.500px;top:160.500px;font-size:11px">1</div><div class="t" style="left:307.300px;top:160.500px;font-size:11px">of</div><div class="t" style="left:324.500px;top:160.500px;font-size:11px">2 ?</div><svg style="left:349px;top:162.5px" width="7" height="11" viewBox="0 0 7 11"><path d="M0 0v11L6.500 5.500z" fill="#2f6fd0"/></svg><svg style="left:370px;top:162.5px" width="10" height="11" viewBox="0 0 10 11"><path d="M0 0v11L7 5.500z" fill="#2f6fd0"/><rect x="7.500" y="0" width="2.500" height="11" fill="#2f6fd0"/></svg><div class="a" style="left:392px;top:161px;width:1px;height:15px;background:#8f93a8;box-shadow:1px 0 0 #fff"></div><svg style="left:401px;top:164px" width="9" height="8" viewBox="0 0 9 8"><path d="M0 4l4.500-4v2.500h4.500v3h-4.500v2.500z" fill="#b4b7c2"/></svg><svg style="left:421.5px;top:160.5px" width="15" height="15" viewBox="0 0 15 15"><circle cx="7.500" cy="7.500" r="7" fill="#e2e3e8" stroke="#c2c4cc"/><path d="M5 5l5 5M10 5l-5 5" stroke="#b4b6bf" stroke-width="1.800"/></svg><svg style="left:444.5px;top:160.5px" width="15" height="15" viewBox="0 0 15 15"><circle cx="7.500" cy="7.500" r="7" fill="#f2f8fd" stroke="#6f9fd6"/><path d="M4 7a3.500 3.500 0 0 1 6-2.300" stroke="#2e9e3a" stroke-width="1.700" fill="none"/><path d="M11.300 2.500v3.500h-3.500z" fill="#2e9e3a"/><path d="M11 8a3.500 3.500 0 0 1 -6 2.300" stroke="#2e9e3a" stroke-width="1.700" fill="none"/><path d="M3.700 12.500v-3.500h3.500z" fill="#2e9e3a"/></svg><div class="a" style="left:467px;top:161px;width:1px;height:15px;background:#8f93a8;box-shadow:1px 0 0 #fff"></div><svg style="left:473px;top:160.5px" width="16" height="15" viewBox="0 0 16 15"><rect x="4.500" y="0.500" width="7" height="5" fill="#fff" stroke="#7d8293"/><rect x="0.500" y="4.500" width="15" height="7" rx="1.500" fill="#b9bcc8" stroke="#6f7485"/><rect x="1.500" y="6" width="13" height="2" fill="#dfe1e8"/><rect x="4.500" y="9.500" width="7" height="5" fill="#fff" stroke="#7d8293"/><rect x="7" y="11" width="2" height="2" fill="#6fa0dc"/></svg><svg style="left:496px;top:160.5px" width="16" height="15" viewBox="0 0 16 15"><rect x="0.500" y="0.500" width="15" height="14" rx="1.500" fill="#7fb87a" stroke="#3d7a3d"/><rect x="3.500" y="1.500" width="9" height="12" fill="#fff" stroke="#5a8f58"/><path d="M5 4.500h6M5 6.500h6M5 8.500h6M5 10.500h6" stroke="#7a8aa8"/></svg><svg style="left:519px;top:161.5px" width="15" height="14" viewBox="0 0 15 14"><path d="M0.500 2.500c2-2 4.500-2 6.500 0v10.500c-2-2-4.500-2-6.500 0z" fill="#fafafa" stroke="#6f7485"/><path d="M7 2.500h7.500v10.500h-7.500z" fill="#dfe6f4" stroke="#6f7485"/></svg><svg style="left:542px;top:160.5px" width="16" height="16" viewBox="0 0 16 16"><rect x="0.500" y="0.500" width="11" height="11" fill="#4a4db0" stroke="#2c2f82"/><rect x="2.500" y="0.500" width="7" height="5" fill="#eef0fa"/><rect x="3" y="7.500" width="5" height="4" fill="#23265e"/><path d="M6 9l3-2 6 6-3 2.500z" fill="#3aa83a" stroke="#1f7a22" stroke-width=".6"/><path d="M9 15.500l6 0 0-5z" fill="#2f9a32"/></svg><div class="dd" style="left:559px;top:167px"></div><div class="a" style="left:573px;top:161px;width:1px;height:15px;background:#8f93a8;box-shadow:1px 0 0 #fff"></div><div class="a" style="left:583px;top:156px;width:99px;height:25px;background:#fff"></div><div class="t" style="left:586.500px;top:160.500px;font-size:11px">100%</div><div class="a" style="left:671px;top:159px;width:11px;height:20px;background:linear-gradient(180deg,#d3e6f3,#9ccbe8 50%,#7db9e0)"></div><div class="dd" style="left:673.500px;top:167px"></div><div class="a" style="left:694px;top:156px;width:74px;height:25px;background:#fff"></div><div class="t" style="left:778.500px;top:161px;color:#6f6f80;letter-spacing:-.4px">Find</div><div class="a" style="left:811px;top:163px;width:1px;height:11px;background:#9a9a9a"></div><div class="t" style="left:821.500px;top:161px;color:#6f6f80;letter-spacing:-.3px">Next</div><div class="a" id="rpt" style="left:216px;top:181px;width:832px;height:501px;background:#fff;overflow:hidden;font-size:13.330px"><div class="a" style="left:346px;top:0;width:500px;height:24px;background:#d3d3d3"></div><div class="t hd" style="left:346px;top:0;width:192px">Black</div><div class="t hd" style="left:538px;top:0;width:192px">Red</div><div class="t hd" style="left:730px;top:0;width:192px">Silver</div><div class="a" style="left:0;top:24px;width:346px;height:480px;background:#d3d3d3"></div><div class="a" style="left:442px;top:24px;width:1px;height:480px;background:#d3d3d3"></div><div class="a" style="left:538px;top:24px;width:1px;height:480px;background:#d3d3d3"></div><div class="a" style="left:634px;top:24px;width:1px;height:480px;background:#d3d3d3"></div><div class="a" style="left:730px;top:24px;width:1px;height:480px;background:#d3d3d3"></div><div class="a" style="left:826px;top:24px;width:1px;height:480px;background:#d3d3d3"></div><div class="a" style="left:346px;top:48px;width:490px;height:1px;background:#d3d3d3"></div><div class="t rn" style="left:3px;top:24px">Mountain-100 Black, 38</div><div class="t nv" style="left:346px;top:24px">165,374.51</div><div class="t nv" style="left:442px;top:24px">$13,229.96</div><div class="t nv" style="left:538px;top:24px">0.00</div><div class="t nv" style="left:634px;top:24px">$0.00</div><div class="t nv" style="left:730px;top:24px">0.00</div><div class="a" style="left:346px;top:72px;width:490px;height:1px;background:#d3d3d3"></div><div class="t rn" style="left:3px;top:48px">Mountain-100 Black, 42</div><div class="t nv" style="left:346px;top:48px">151,874.55</div><div class="t nv" style="left:442px;top:48px">$12,149.96</div><div class="t nv" style="left:538px;top:48px">0.00</div><div class="t nv" style="left:634px;top:48px">$0.00</div><div class="t nv" style="left:730px;top:48px">0.00</div><div class="a" style="left:346px;top:96px;width:490px;height:1px;background:#d3d3d3"></div><div class="t rn" style="left:3px;top:72px">Mountain-100 Black, 44</div><div class="t nv" style="left:346px;top:72px">202,499.40</div><div class="t nv" style="left:442px;top:72px">$16,199.95</div><div class="t nv" style="left:538px;top:72px">0.00</div><div class="t nv" style="left:634px;top:72px">$0.00</div><div class="t nv" style="left:730px;top:72px">0.00</div><div class="a" style="left:346px;top:120px;width:490px;height:1px;background:#d3d3d3"></div><div class="t rn" style="left:3px;top:96px">Mountain-100 Black, 48</div><div class="t nv" style="left:346px;top:96px">192,374.43</div><div class="t nv" style="left:442px;top:96px">$15,389.95</div><div class="t nv" style="left:538px;top:96px">0.00</div><div class="t nv" style="left:634px;top:96px">$0.00</div><div class="t nv" style="left:730px;top:96px">0.00</div><div class="a" style="left:346px;top:144px;width:490px;height:1px;background:#d3d3d3"></div><div class="t rn" style="left:3px;top:120px">Mountain-100 Silver, 38</div><div class="t nv" style="left:346px;top:120px">0.00</div><div class="t nv" style="left:442px;top:120px">$0.00</div><div class="t nv" style="left:538px;top:120px">0.00</div><div class="t nv" style="left:634px;top:120px">$0.00</div><div class="t nv" style="left:730px;top:120px">197,199.42</div><div class="a" style="left:346px;top:168px;width:490px;height:1px;background:#d3d3d3"></div><div class="t rn" style="left:3px;top:144px">Mountain-100 Silver, 42</div><div class="t nv" style="left:346px;top:144px">0.00</div><div class="t nv" style="left:442px;top:144px">$0.00</div><div class="t nv" style="left:538px;top:144px">0.00</div><div class="t nv" style="left:634px;top:144px">$0.00</div><div class="t nv" style="left:730px;top:144px">142,799.58</div><div class="a" style="left:346px;top:192px;width:490px;height:1px;background:#d3d3d3"></div><div class="t rn" style="left:3px;top:168px">Mountain-100 Silver, 44</div><div class="t nv" style="left:346px;top:168px">0.00</div><div class="t nv" style="left:442px;top:168px">$0.00</div><div class="t nv" style="left:538px;top:168px">0.00</div><div class="t nv" style="left:634px;top:168px">$0.00</div><div class="t nv" style="left:730px;top:168px">166,599.51</div><div class="a" style="left:346px;top:216px;width:490px;height:1px;background:#d3d3d3"></div><div class="t rn" style="left:3px;top:192px">Mountain-100 Silver, 48</div><div class="t nv" style="left:346px;top:192px">0.00</div><div class="t nv" style="left:442px;top:192px">$0.00</div><div class="t nv" style="left:538px;top:192px">0.00</div><div class="t nv" style="left:634px;top:192px">$0.00</div><div class="t nv" style="left:730px;top:192px">122,399.64</div><div class="a" style="left:346px;top:240px;width:490px;height:1px;background:#d3d3d3"></div><div class="t rn" style="left:3px;top:216px">Mountain-200 Black, 38</div><div class="t nv" style="left:346px;top:216px">278,677.36</div><div class="t nv" style="left:442px;top:216px">$22,294.19</div><div class="t nv" style="left:538px;top:216px">0.00</div><div class="t nv" style="left:634px;top:216px">$0.00</div><div class="t nv" style="left:730px;top:216px">0.00</div><div class="a" style="left:346px;top:264px;width:490px;height:1px;background:#d3d3d3"></div><div class="t rn" style="left:3px;top:240px">Mountain-200 Black, 42</div><div class="t nv" style="left:346px;top:240px">321,708.42</div><div class="t nv" style="left:442px;top:240px">$25,736.68</div><div class="t nv" style="left:538px;top:240px">0.00</div><div class="t nv" style="left:634px;top:240px">$0.00</div><div class="t nv" style="left:730px;top:240px">0.00</div><div class="a" style="left:346px;top:288px;width:490px;height:1px;background:#d3d3d3"></div><div class="t rn" style="left:3px;top:264px">Mountain-200 Black, 46</div><div class="t nv" style="left:346px;top:264px">358,592.19</div><div class="t nv" style="left:442px;top:264px">$28,687.38</div><div class="t nv" style="left:538px;top:264px">0.00</div><div class="t nv" style="left:634px;top:264px">$0.00</div><div class="t nv" style="left:730px;top:264px">0.00</div><div class="a" style="left:346px;top:312px;width:490px;height:1px;background:#d3d3d3"></div><div class="t rn" style="left:3px;top:288px">Mountain-200 Silver, 38</div><div class="t nv" style="left:346px;top:288px">0.00</div><div class="t nv" style="left:442px;top:288px">$0.00</div><div class="t nv" style="left:538px;top:288px">0.00</div><div class="t nv" style="left:634px;top:288px">$0.00</div><div class="t nv" style="left:730px;top:288px">306,570.10</div><div class="a" style="left:346px;top:336px;width:490px;height:1px;background:#d3d3d3"></div><div class="t rn" style="left:3px;top:312px">Mountain-200 Silver, 42</div><div class="t nv" style="left:346px;top:312px">0.00</div><div class="t nv" style="left:442px;top:312px">$0.00</div><div class="t nv" style="left:538px;top:312px">0.00</div><div class="t nv" style="left:634px;top:312px">$0.00</div><div class="t nv" style="left:730px;top:312px">281,713.07</div><div class="a" style="left:346px;top:360px;width:490px;height:1px;background:#d3d3d3"></div><div class="t rn" style="left:3px;top:336px">Mountain-200 Silver, 46</div><div class="t nv" style="left:346px;top:336px">0.00</div><div class="t nv" style="left:442px;top:336px">$0.00</div><div class="t nv" style="left:538px;top:336px">0.00</div><div class="t nv" style="left:634px;top:336px">$0.00</div><div class="t nv" style="left:730px;top:336px">302,427.26</div><div class="a" style="left:346px;top:384px;width:490px;height:1px;background:#d3d3d3"></div><div class="t rn" style="left:3px;top:360px">Road-150 Red, 44</div><div class="t nv" style="left:346px;top:360px">0.00</div><div class="t nv" style="left:442px;top:360px">$0.00</div><div class="t nv" style="left:538px;top:360px">1,005,493.87</div><div class="t nv" style="left:634px;top:360px">$80,439.51</div><div class="t nv" style="left:730px;top:360px">0.00</div><div class="a" style="left:346px;top:408px;width:490px;height:1px;background:#d3d3d3"></div><div class="t rn" style="left:3px;top:384px">Road-150 Red, 48</div><div class="t nv" style="left:346px;top:384px">0.00</div><div class="t nv" style="left:442px;top:384px">$0.00</div><div class="t nv" style="left:538px;top:384px">1,205,876.99</div><div class="t nv" style="left:634px;top:384px">$96,470.16</div><div class="t nv" style="left:730px;top:384px">0.00</div><div class="a" style="left:346px;top:432px;width:490px;height:1px;background:#d3d3d3"></div><div class="t rn" style="left:3px;top:408px">Road-150 Red, 52</div><div class="t nv" style="left:346px;top:408px">0.00</div><div class="t nv" style="left:442px;top:408px">$0.00</div><div class="t nv" style="left:538px;top:408px">1,080,637.54</div><div class="t nv" style="left:634px;top:408px">$86,451.00</div><div class="t nv" style="left:730px;top:408px">0.00</div><div class="a" style="left:346px;top:456px;width:490px;height:1px;background:#d3d3d3"></div><div class="t rn" style="left:3px;top:432px">Road-150 Red, 56</div><div class="t nv" style="left:346px;top:432px">0.00</div><div class="t nv" style="left:442px;top:432px">$0.00</div><div class="t nv" style="left:538px;top:432px">1,055,589.65</div><div class="t nv" style="left:634px;top:432px">$84,447.17</div><div class="t nv" style="left:730px;top:432px">0.00</div><div class="a" style="left:346px;top:480px;width:490px;height:1px;background:#d3d3d3"></div><div class="t rn" style="left:3px;top:456px">Road-150 Red, 62</div><div class="t nv" style="left:346px;top:456px">0.00</div><div class="t nv" style="left:442px;top:456px">$0.00</div><div class="t nv" style="left:538px;top:456px">1,202,298.72</div><div class="t nv" style="left:634px;top:456px">$96,183.90</div><div class="t nv" style="left:730px;top:456px">0.00</div><div class="a" style="left:346px;top:504px;width:490px;height:1px;background:#d3d3d3"></div><div class="t rn" style="left:3px;top:480px">Road-250 Black, 44</div><div class="t nv" style="left:346px;top:480px">244,335.00</div><div class="t nv" style="left:442px;top:480px">$19,546.80</div><div class="t nv" style="left:538px;top:480px">0.00</div><div class="t nv" style="left:634px;top:480px">$0.00</div><div class="t nv" style="left:730px;top:480px">0.00</div></div><div class="a" style="left:1048px;top:181px;width:17px;height:501px;background:#f0f0f0"></div><svg style="left:1054px;top:188.5px" width="7" height="4" viewBox="0 0 7 4"><path d="M0 4l3.500-4 3.500 4z" fill="#4a4a4a"/></svg><svg style="left:1054px;top:671.5px" width="7" height="4" viewBox="0 0 7 4"><path d="M0 0l3.500 4 3.500-4z" fill="#4a4a4a"/></svg><div class="a" style="left:1050px;top:199px;width:14px;height:219px;border:1px solid #979797;border-radius:2px;background:linear-gradient(90deg,#f4f4f4 0,#e8e8e8 45%,#d2d2d2 55%,#c6c6c6 100%);box-shadow:inset 0 0 0 1px rgba(255,255,255,.7)"></div><div class="a" style="left:1054px;top:305px;width:6px;height:1px;background:#5d5d5d;box-shadow:0 1px 0 #fff"></div><div class="a" style="left:1054px;top:307px;width:6px;height:1px;background:#5d5d5d;box-shadow:0 1px 0 #fff"></div><div class="a" style="left:1054px;top:309px;width:6px;height:1px;background:#5d5d5d;box-shadow:0 1px 0 #fff"></div><div class="a" style="left:1054px;top:311px;width:6px;height:1px;background:#5d5d5d;box-shadow:0 1px 0 #fff"></div><div class="a" style="left:216px;top:682px;width:849px;height:17px;background:#f0f0f0"></div><svg style="left:222px;top:686.5px" width="5" height="8" viewBox="0 0 5 8"><path d="M4.500 0v7.500L0 3.750z" fill="#3a3a3a"/></svg><svg style="left:1037px;top:686.5px" width="5" height="8" viewBox="0 0 5 8"><path d="M0 0v7.500L4.500 3.750z" fill="#3a3a3a"/></svg><div class="a" style="left:234px;top:683px;width:593px;height:15px;border:1px solid #979797;border-radius:2px;background:linear-gradient(180deg,#f4f4f4 0,#e8e8e8 45%,#d2d2d2 55%,#c6c6c6 100%);box-shadow:inset 0 0 0 1px rgba(255,255,255,.7)"></div><div class="a" style="left:526px;top:687px;width:1px;height:6px;background:#5d5d5d;box-shadow:1px 0 0 #fff"></div><div class="a" style="left:528px;top:687px;width:1px;height:6px;background:#5d5d5d;box-shadow:1px 0 0 #fff"></div><div class="a" style="left:530px;top:687px;width:1px;height:6px;background:#5d5d5d;box-shadow:1px 0 0 #fff"></div><div class="a" style="left:532px;top:687px;width:1px;height:6px;background:#5d5d5d;box-shadow:1px 0 0 #fff"></div><div class="a" style="left:215px;top:155px;width:1px;height:545px;background:#6a6a6a"></div><div class="a" style="left:215px;top:699px;width:851px;height:1px;background:#6a6a6a"></div><div class="a" style="left:1065px;top:181px;width:1px;height:519px;background:#6a6a6a"></div>
<!-- p_right -->
<div class="phead" style="left:1076px;top:99px;width:290px"><div class="t" style="top:2px;letter-spacing:-0.17px">Solution Explorer</div></div><div class="dd" style="left:1317px;top:108px;border-left-width:4px;border-right-width:4px;border-top-width:4px;border-top-color:#2b3644"></div><svg style="left:1333px;top:103px" width="8" height="10" viewBox="0 0 8 10"><path d="M1.500 0.500h4.500M2 0.500v5M5 0.500v5M4.300 0.500v5M0 5.500h8M3.500 6v4" stroke="#2b3644" fill="none"/></svg><svg style="left:1350.5px;top:104px" width="8" height="8" viewBox="0 0 8 8"><path d="M0.700 0.700l6.600 6.600M7.300 0.700l-6.600 6.600" stroke="#2b3644" stroke-width="1.700"/></svg><div class="a" style="left:1076px;top:117px;width:290px;height:27px;background:linear-gradient(180deg,#fbfcfe 0,#eef0f8 40%,#d3d8e9 85%,#c8cde0 100%);border-bottom:1px solid #8e8e8e"></div><svg style="left:1083px;top:122px" width="16" height="15" viewBox="0 0 16 15"><path d="M0.500 1.500h4l1 1.500h5v8h-10z" fill="#e8d48a" stroke="#8d8d7a"/><rect x="2.500" y="4.500" width="9" height="6" fill="#f4f4f0" stroke="#8d8d8d"/><rect x="5.500" y="8.500" width="10" height="6" fill="#e8eefb" stroke="#3c4f86"/><rect x="6" y="9" width="9" height="1.500" fill="#4a68b8"/><path d="M7 12.500h2M10 12.500h4" stroke="#3c4f86"/></svg><div class="a" style="left:1105px;top:121px;width:1px;height:17px;background:#9a9eb2;box-shadow:1px 0 0 #fff"></div><svg style="left:1112px;top:121px" width="14" height="16" viewBox="0 0 14 16"><path d="M0.500 0.500h7v3" fill="none" stroke="#b4b7c4" stroke-dasharray="1 1"/><path d="M0.500 0.500v9h3" fill="none" stroke="#b4b7c4" stroke-dasharray="1 1"/><path d="M4.500 4.500h6l3 3v8h-9z" fill="#eeeff4" stroke="#a5a9b8"/><path d="M10.500 4.500v3h3" fill="none" stroke="#a5a9b8"/><path d="M6 9.500h5M6 11.500h5M6 13.500h5" stroke="#c0c3ce"/></svg><div class="a" style="left:1076px;top:144px;width:290px;height:256px;border:1px solid #9c9c9c;border-right:none;background:#fff"></div><div class="a" style="left:1087px;top:162px;width:1px;height:7px;background:repeating-linear-gradient(180deg,#8a8a8a 0,#8a8a8a 1px,transparent 1px,transparent 2px)"></div><div class="a" style="left:1087px;top:178px;width:1px;height:45px;background:repeating-linear-gradient(180deg,#8a8a8a 0,#8a8a8a 1px,transparent 1px,transparent 2px)"></div><div class="a" style="left:1092px;top:173px;width:8px;height:1px;background:repeating-linear-gradient(90deg,#8a8a8a 0,#8a8a8a 1px,transparent 1px,transparent 2px)"></div><div class="a" style="left:1088px;top:209px;width:12px;height:1px;background:repeating-linear-gradient(90deg,#8a8a8a 0,#8a8a8a 1px,transparent 1px,transparent 2px)"></div><div class="a" style="left:1092px;top:227px;width:8px;height:1px;background:repeating-linear-gradient(90deg,#8a8a8a 0,#8a8a8a 1px,transparent 1px,transparent 2px)"></div><div class="a" style="left:1106px;top:180px;width:1px;height:11px;background:repeating-linear-gradient(180deg,#8a8a8a 0,#8a8a8a 1px,transparent 1px,transparent 2px)"></div><div class="a" style="left:1106px;top:191px;width:12px;height:1px;background:repeating-linear-gradient(90deg,#8a8a8a 0,#8a8a8a 1px,transparent 1px,transparent 2px)"></div><div class="a" style="left:1106px;top:234px;width:1px;height:11px;background:repeating-linear-gradient(180deg,#8a8a8a 0,#8a8a8a 1px,transparent 1px,transparent 2px)"></div><div class="a" style="left:1106px;top:245px;width:12px;height:1px;background:repeating-linear-gradient(90deg,#8a8a8a 0,#8a8a8a 1px,transparent 1px,transparent 2px)"></div><div class="a" style="left:1083px;top:169px;width:9px;height:9px;border:1px solid #8a8fa6;background:linear-gradient(135deg,#fff,#dfe2ee);border-radius:1px"><div class="a" style="left:1px;top:3px;width:5px;height:1px;background:#3c4b7a"></div></div><div class="a" style="left:1083px;top:223px;width:9px;height:9px;border:1px solid #8a8fa6;background:linear-gradient(135deg,#fff,#dfe2ee);border-radius:1px"><div class="a" style="left:1px;top:3px;width:5px;height:1px;background:#3c4b7a"></div></div><svg style="left:1086px;top:145px" width="15" height="16" viewBox="0 0 15 16"><rect x="4.500" y="0.500" width="9" height="11" fill="#fbfbfd" stroke="#7d8293"/><path d="M6 3h6M6 5h6M6 7h3" stroke="#8f97ad"/><rect x="0.500" y="5.500" width="5" height="8" fill="#e9edf6" stroke="#55618a"/><rect x="3.500" y="7.500" width="6" height="8" fill="#dfe6f6" stroke="#2f4b86"/><path d="M5 10h3M5 12h3" stroke="#4a74c9"/><rect x="9.500" y="8" width="4.500" height="5" fill="#3aa83a"/></svg><div class="t" style="left:1107px;top:146px;font-weight:bold;letter-spacing:-0.535px">RS Proj</div><svg style="left:1105px;top:164px" width="16" height="13" viewBox="0 0 16 13"><path d="M0.500 12V1.500h4.500l1.500 2h7v3" fill="#e9c45a" stroke="#a8842a"/><path d="M0.500 12.500l3-6.500h12.500l-3.500 6.500z" fill="#f7dd83" stroke="#a8842a"/></svg><div class="t" style="left:1126px;top:164px;letter-spacing:-0.444px">Shared Data Sources</div><svg style="left:1126px;top:181px" width="14" height="15" viewBox="0 0 14 15"><ellipse cx="7" cy="2.500" rx="4.500" ry="2" fill="#f7dd83" stroke="#a8842a"/><path d="M2.500 2.500v6a4.500 2 0 0 0 9 0v-6" fill="#efc64f" stroke="#a8842a"/><path d="M7 10.500v2M0 13.500h14" stroke="#6d7fa8" stroke-width="1.300"/><rect x="5" y="12" width="4" height="3" fill="#b9c6e6" stroke="#55618a" stroke-width=".7"/></svg><div class="t" style="left:1145px;top:182px;letter-spacing:-0.508px">ADV DB.rds</div><svg style="left:1105px;top:200px" width="16" height="13" viewBox="0 0 16 13"><path d="M0.500 1.500h5l1.500 2h8v9h-14.500z" fill="#f3d36e" stroke="#a8842a"/><path d="M1 4.500h13.500" stroke="#fbeaa8"/><path d="M1.500 12h13v-7" stroke="#d1aa3e" fill="none"/></svg><div class="t" style="left:1126px;top:200px;letter-spacing:-0.472px">Shared Datasets</div><svg style="left:1105px;top:218px" width="16" height="13" viewBox="0 0 16 13"><path d="M0.500 12V1.500h4.500l1.500 2h7v3" fill="#e9c45a" stroke="#a8842a"/><path d="M0.500 12.500l3-6.500h12.500l-3.500 6.500z" fill="#f7dd83" stroke="#a8842a"/></svg><div class="t" style="left:1126px;top:218px;letter-spacing:-0.345px">Reports</div><svg style="left:1127px;top:235px" width="12" height="15" viewBox="0 0 12 15"><path d="M0.500 0.500h8l3 3v11h-11z" fill="#fdfdfe" stroke="#6f7893"/><path d="M2 3h5M2 5h7" stroke="#7f8aa8"/><rect x="2" y="9" width="2" height="4" fill="#d9534a"/><rect x="5" y="7" width="2" height="6" fill="#4a74c9"/><rect x="8" y="10" width="2" height="3" fill="#3aa83a"/></svg><div class="a" style="left:1143px;top:234px;width:81px;height:17px;background:#f0f0f0"></div><div class="t" style="left:1145px;top:236px;letter-spacing:-0.19px">First Report.rdl</div><div class="a" style="left:1076px;top:404px;width:290px;height:301px;background:#f0f0f0;border:1px solid #a0a0a0;border-right:none"></div><div class="phead" style="left:1077px;top:405px;width:289px;height:19px;background:linear-gradient(180deg,#b9cde6 0,#cfdcee 45%,#e9eff8 100%)"><div class="t" style="top:1px;left:3px;letter-spacing:-0.239px">Properties</div></div><div class="dd" style="left:1317px;top:413px;border-left-width:4px;border-right-width:4px;border-top-width:4px;border-top-color:#2b3644"></div><svg style="left:1333px;top:408px" width="8" height="10" viewBox="0 0 8 10"><path d="M1.500 0.500h4.500M2 0.500v5M5 0.500v5M4.300 0.500v5M0 5.500h8M3.500 6v4" stroke="#2b3644" fill="none"/></svg><svg style="left:1350.5px;top:409px" width="8" height="8" viewBox="0 0 8 8"><path d="M0.700 0.700l6.600 6.600M7.300 0.700l-6.600 6.600" stroke="#2b3644" stroke-width="1.700"/></svg><div class="a" style="left:1077px;top:427px;width:289px;height:21px;background:#fff"></div><div class="a" style="left:1351px;top:428px;width:12px;height:19px;background:#efefef"></div><div class="dd" style="left:1354px;top:436px"></div><div class="a" style="left:1077px;top:451px;width:289px;height:26px;background:linear-gradient(180deg,#fbfcfe 0,#eef0f8 40%,#d3d8e9 85%,#c8cde0 100%);border-bottom:1px solid #8e8e8e"></div><svg style="left:1081px;top:455px" width="16" height="16" viewBox="0 0 16 16"><rect x="0.500" y="0.500" width="6" height="6" fill="#fff" stroke="#6f7487"/><path d="M2 3.500h3M3.500 2v3" stroke="#222"/><rect x="0.500" y="9.500" width="6" height="6" fill="#fff" stroke="#6f7487"/><path d="M2 12.500h3M3.500 11v3" stroke="#222"/><path d="M8 1.500h8M8 3.500h3M12 3.500h4M8 5.500h3M12 5.500h4M8 10.500h8M8 12.500h3M12 12.500h4M8 14.500h3M12 14.500h4" stroke="#8a8fa3" stroke-dasharray="2 1"/></svg><div class="sel" style="left:1101px;top:453px;width:23px;height:22px;border-color:#3c9fd6;background:linear-gradient(180deg,#e2f4fd,#b4e0f6)"></div><div class="t" style="left:1104px;top:455px;font-family:'Liberation Serif',serif;font-weight:bold;font-size:10px;line-height:9px;color:#2b3f9a">A</div><div class="t" style="left:1104px;top:464px;font-family:'Liberation Serif',serif;font-weight:bold;font-size:10px;line-height:9px;color:#a23a3a">Z</div><svg style="left:1114px;top:456px" width="5" height="14" viewBox="0 0 5 14"><path d="M2.500 0v13" stroke="#000" stroke-width="1.200"/><path d="M0 9.500h5l-2.500 4z" fill="#000"/></svg><div class="a" style="left:1127px;top:455px;width:1px;height:17px;background:#9a9eb2;box-shadow:1px 0 0 #fff"></div><svg style="left:1133px;top:455px" width="16" height="15" viewBox="0 0 16 15"><rect x="0.500" y="0.500" width="15" height="14" fill="#dcdcdc" stroke="#b0b0b0"/><rect x="1" y="1" width="14" height="2" fill="#c4c4c4"/><rect x="3.500" y="5.500" width="9" height="6" fill="#e8e8e8" stroke="#b4b4b4"/><path d="M5 8.500h2M8 8.500h3" stroke="#b0b0b0"/></svg><div class="a" style="left:1077px;top:477px;width:289px;height:166px;background:#fff;border-bottom:1px solid #a0a0a0"></div><div class="a" style="left:1077px;top:646px;width:289px;height:1px;background:#a0a0a0"></div>
<!-- p_bottom -->
<div id="status" class="a"><div class="t" style="left:9px;top:5px;letter-spacing:-.45px">Ready</div></div><div id="taskbar" class="a"><div class="a" style="left:0;top:0;width:1366px;height:1px;background:#2a1d12"></div><div class="a" style="left:0;top:1px;width:1366px;height:1px;background:rgba(255,255,255,.22)"></div><svg style="left:8px;top:1px" width="38" height="38" viewBox="0 0 38 38"><defs><radialGradient id="orb" cx="50%" cy="35%" r="65%"><stop offset="0" stop-color="#8fd0f5"/><stop offset=".45" stop-color="#2f7fd0"/><stop offset="1" stop-color="#0d2f6e"/></radialGradient></defs><circle cx="19" cy="19" r="18.500" fill="url(#orb)" stroke="#0a1f45" stroke-width="1"/><circle cx="19" cy="19" r="17" fill="none" stroke="rgba(170,220,255,.55)" stroke-width="1.200"/><path d="M10 12.500c3-1.800 5.500-1.500 8 0l-1.500 6c-2.500-1.500-5-1.800-8 0z" fill="#e8532b"/><path d="M19.500 13c2.500 1.500 5.500 1.800 8.500 0l-1.500 6c-3 1.800-6 1.500-8.500 0z" fill="#7fc241"/><path d="M8 20.500c3-1.800 5.500-1.500 8 0l-1.500 6c-2.500-1.500-5-1.800-8 0z" fill="#2fa0e8"/><path d="M17.500 21c2.500 1.500 5.500 1.800 8.500 0l-1.500 6c-3 1.800-6 1.500-8.500 0z" fill="#fbc02a"/><path d="M3 21a16 16 0 0 0 32 0a16 12 0 0 1-32 0z" fill="rgba(120,220,255,.35)"/></svg><svg style="left:72px;top:5px" width="33" height="30" viewBox="0 0 33 30"><path d="M1 6.500q0-2 2-2h8l2 2.500h17q2 0 2 2v18q0 2-2 2h-27q-2 0-2-2z" fill="#f3dc8c" stroke="#c7a94c"/><rect x="4" y="2.500" width="24" height="8" fill="#fbfbf4" stroke="#c9c9b8"/><rect x="6" y="4" width="3" height="2" fill="#3aa83a"/><rect x="12" y="4" width="3" height="2" fill="#d9534a"/><rect x="19" y="5" width="3" height="2" fill="#2f7fd0"/><path d="M1 12h31v15q0 2-2 2h-27q-2 0-2-2z" fill="#f7e6a2" stroke="#d8bd62"/><path d="M6 29v-9q0-2 2-2h17q2 0 2 2v9h-4v-6h-13v6z" fill="#7fc0ea" stroke="#3d8cc4"/><rect x="10" y="20" width="13" height="2.500" fill="#cfeaf9"/></svg><svg style="left:136px;top:4px" width="31" height="31" viewBox="0 0 31 31"><defs><linearGradient id="ieg" x1="0" y1="0" x2="0" y2="1"><stop offset="0" stop-color="#5cc6f5"/><stop offset="1" stop-color="#1f8fd6"/></linearGradient></defs><path d="M15.500 5.500a11.500 11.500 0 1 0 11 15h-6.500a5.500 5.500 0 0 1 -10-2h17a11.500 11.500 0 0 0 -11.500-13zM10 14.500a5.500 5.500 0 0 1 11 0z" fill="url(#ieg)" stroke="#1672b3" stroke-width=".6"/><path d="M27 6c3-4 1-6.500-4-4.500c-7 2.500-17 12-20 20c-2 5 0 7.500 5 5" fill="none" stroke="#f2b71c" stroke-width="2.200"/></svg><div class="a" style="left:184px;top:1px;width:58px;height:38px;border-radius:3px;border:1px solid rgba(20,12,6,.75);box-shadow:inset 0 0 0 1px rgba(255,255,255,.35);background:linear-gradient(180deg,rgba(255,255,255,.30) 0,rgba(255,255,255,.17) 48%,rgba(255,255,255,.08) 52%,rgba(255,255,255,.16) 100%)"></div><div class="a" style="left:246px;top:1px;width:58px;height:38px;border-radius:3px;border:1px solid rgba(20,12,6,.75);box-shadow:inset 0 0 0 1px rgba(255,255,255,.35);background:linear-gradient(180deg,rgba(255,255,255,.30) 0,rgba(255,255,255,.17) 48%,rgba(255,255,255,.08) 52%,rgba(255,255,255,.16) 100%)"></div><div class="a" style="left:308px;top:1px;width:58px;height:38px;border-radius:3px;border:1px solid rgba(20,12,6,.75);box-shadow:inset 0 0 0 1px rgba(255,255,255,.35);background:linear-gradient(180deg,rgba(255,255,255,.62) 0,rgba(255,255,255,.42) 48%,rgba(255,255,255,.30) 52%,rgba(255,255,255,.40) 100%)"></div><svg style="left:198px;top:5px" width="30" height="30" viewBox="0 0 30 30"><circle cx="15" cy="15" r="14.500" fill="#e23a2e"/><path d="M15 15L2.400 7.800A14.500 14.500 0 0 0 13 29.400z" fill="#3aa757"/><path d="M15 15l-2 14.400A14.500 14.500 0 0 0 27.600 7.800H15z" fill="#fbc116"/><path d="M15 15L2.400 7.800A14.500 14.500 0 0 1 27.600 7.800z" fill="#e23a2e"/><circle cx="15" cy="15" r="6.600" fill="#fff"/><circle cx="15" cy="15" r="5.300" fill="#3b7ded"/></svg><svg style="left:259px;top:8px" width="33" height="28" viewBox="0 0 33 28"><path d="M1 4q0-3 3-3h2.500v3l2-3h3.500v3l2-3h3.500v3l2-3h3.500v3l2-3h3q2.500 0 2.500 2.500v15q0 3-3 3h-24.500q-2.500 0-2.500-2.500z" fill="#f07a1c" stroke="#c95c0b"/><path d="M6 8v11M12 7v12M18 7v12M24 8v9" stroke="#fff" stroke-width="3.200" stroke-linecap="round"/><path d="M19 13h12v8q-2 5-6 6q-4-1-6-6z" fill="#3d6fcf" stroke="#e8eefb" stroke-width="1.200"/><path d="M25 13v14M19 19.500h12" stroke="#e8eefb" stroke-width="1"/><path d="M25 13.500h5.500v6h-5.500z" fill="#f2c31c"/><path d="M19.500 19.500h5.500v7q-4-1.500-5.500-6z" fill="#f2c31c"/></svg><svg style="left:320px;top:5px" width="33.15" height="37.05" viewBox="0 0 17 19"><path d="M0 7L4 2.500 6.200 5 2 9.200z" fill="#4aa83a"/><path d="M4 2.500L6 1.200 9 4.500 6.500 7z" fill="#f4c62a"/><path d="M10.500 2.800L13 2.300 5.200 13.200 3 11.200z" fill="#e4572a"/><path d="M0 7.300L2 9.200 5.200 13.200 3.300 13.200z" fill="#3f8fd8"/><path d="M12 2.300L16 6.500 14.300 8.200 10.800 4.600z" fill="#3f8fd8"/><path d="M16 6.500L13 10.200 10.500 9.200 14.300 6z" fill="#5aae3e"/><path d="M8.500 8L10.500 9.200 13 10.200 9.500 11.500z" fill="#f0a02a"/><rect x="8.500" y="10.500" width="7" height="7.500" fill="#f6f6f6" stroke="#4a4a4a"/><text x="9.800" y="17" font-family="Liberation Sans" font-size="7" font-weight="bold" fill="#333">9</text></svg><svg style="left:1156.5px;top:19px" width="8" height="5" viewBox="0 0 8 5"><path d="M0 4.500l4-4.500 4 4.500z" fill="#fff"/></svg><svg style="left:1177px;top:13px" width="16" height="16" viewBox="0 0 16 16"><path d="M1.500 0.500v15" stroke="#fff" stroke-width="1.600"/><path d="M3 1.500c3-1.500 5 1.500 8 0v7c-3 1.500-5-1.500-8 0z" fill="#fff"/><path d="M11 4l4.500-0.500-2 5.500-2.500 0.500z" fill="#e8e8e8"/></svg><svg style="left:1202px;top:13px" width="16" height="16" viewBox="0 0 16 16"><rect x="5.500" y="3.500" width="9" height="8" fill="#3a2f28" stroke="#fff" stroke-width="1.400"/><path d="M7 14.500h6M10 12v2.500" stroke="#fff" stroke-width="1.400"/><path d="M2.500 0v5M1 1.500v3.500h3v-3.500M2.500 5v7h3" stroke="#fff" stroke-width="1.300" fill="none"/></svg><svg style="left:1225px;top:12px" width="17" height="17" viewBox="0 0 17 17"><path d="M0.500 6h3l4.500-4.500v13l-4.500-4.500h-3z" fill="#fff" stroke="#d8d8d8" stroke-width=".6"/><circle cx="11.500" cy="11" r="4.300" fill="#e0202a" stroke="#fff" stroke-width="1"/><path d="M9 8.500l5 5" stroke="#fff" stroke-width="1.600"/></svg><svg style="left:1249px;top:12px" width="15" height="17" viewBox="0 0 15 17"><rect x="1" y="2.500" width="8" height="13" rx="1" fill="none" stroke="#fff" stroke-width="1.300"/><rect x="3.500" y="0.500" width="3" height="2" fill="#fff"/><path d="M9 1v3M12.500 1v3M7.500 4h6.500v3.500q-1 2-3.200 2t-3.300-2zM10.800 9.500v4h-3" stroke="#fff" stroke-width="1.300" fill="#fff"/><rect x="1.500" y="7.500" width="7" height="7" fill="#e0202a"/><path d="M2.500 8.500l5 5M7.500 8.500l-5 5" stroke="#7a0d12" stroke-width="1.300"/></svg><div class="t" style="left:1287px;top:6px;color:#fff;font-size:12px;letter-spacing:-0.32px">12:46 PM</div><div class="t" style="left:1285.600px;top:23px;color:#fff;font-size:12px;letter-spacing:-0.304px">12-Jan-13</div><div class="a" style="left:1352px;top:1px;width:14px;height:39px;border-left:1px solid rgba(20,12,6,.8);box-shadow:inset 1px 0 0 rgba(255,255,255,.35);background:linear-gradient(180deg,rgba(255,255,255,.35),rgba(255,255,255,.12) 50%,rgba(255,255,255,.05) 52%,rgba(255,255,255,.15))"></div></div>
</div>
</body>
</html>
